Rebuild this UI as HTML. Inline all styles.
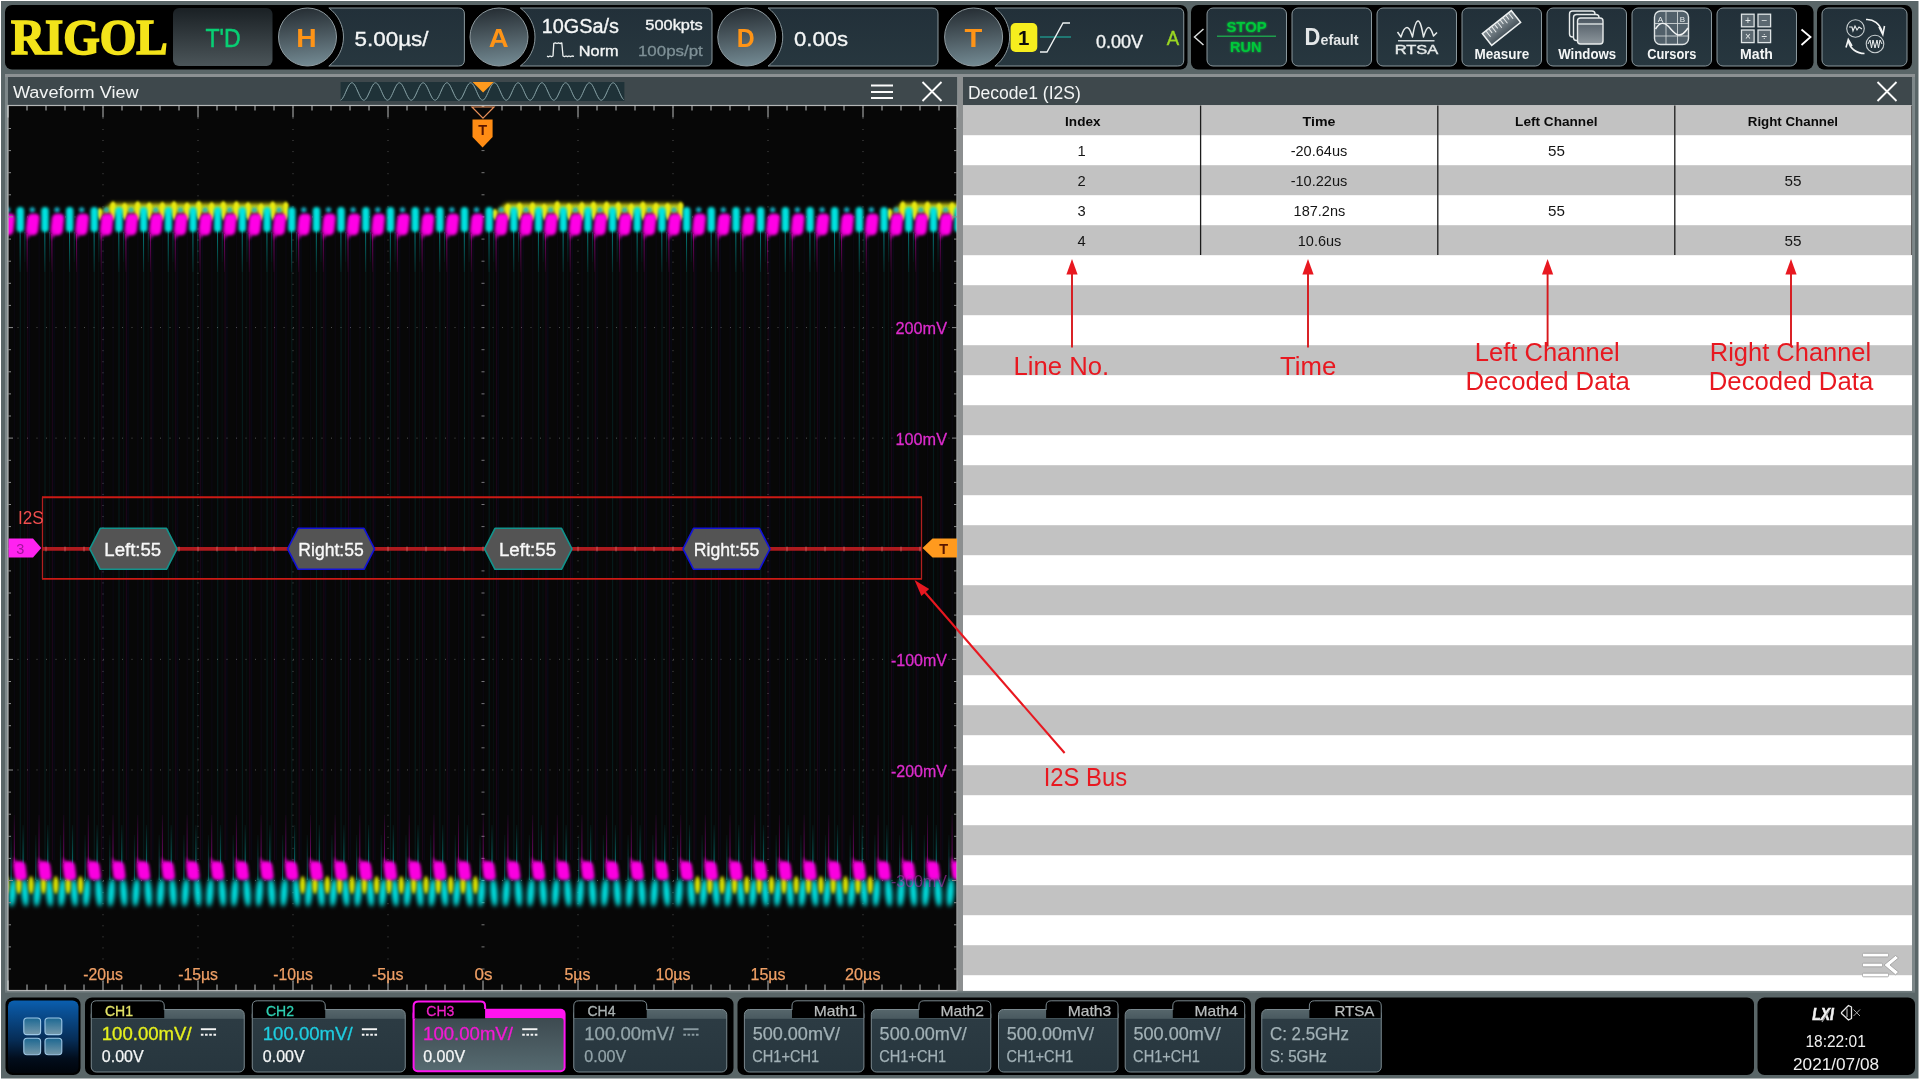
<!DOCTYPE html>
<html lang="en">
<head>
<meta charset="utf-8">
<title>RIGOL Oscilloscope - I2S Decode</title>
<style>
html,body{margin:0;padding:0;background:#fff;width:1920px;height:1080px;overflow:hidden}
svg{display:block;position:absolute;left:0;top:0;will-change:transform;transform:translateZ(0)}
text{white-space:pre}
</style>
</head>
<body>
<svg width="1920" height="1080" viewBox="0 0 1920 1080">
<defs>
<linearGradient id="gBtn" x1="0" y1="0" x2="0" y2="1"><stop offset="0" stop-color="#223039"/><stop offset="1" stop-color="#27373f"/></linearGradient>
<linearGradient id="gTD" x1="0" y1="0" x2="0" y2="1"><stop offset="0" stop-color="#1a2024"/><stop offset="1" stop-color="#4b5559"/></linearGradient>
<linearGradient id="gKnob" x1="0.45" y1="0" x2="0.55" y2="1"><stop offset="0" stop-color="#262e34"/><stop offset="0.5" stop-color="#4d5b62"/><stop offset="1" stop-color="#738a93"/></linearGradient>
<linearGradient id="gHome" x1="0" y1="0" x2="0" y2="1"><stop offset="0" stop-color="#0a5fb0"/><stop offset="0.08" stop-color="#0a56a0"/><stop offset="0.55" stop-color="#062c55"/><stop offset="0.8" stop-color="#020d1c"/><stop offset="1" stop-color="#00040a"/></linearGradient>
<linearGradient id="gSq" x1="0" y1="0" x2="0" y2="1"><stop offset="0" stop-color="#1d6a94"/><stop offset="1" stop-color="#7c9fb0"/></linearGradient>
<linearGradient id="gCh" x1="0" y1="0" x2="0" y2="1"><stop offset="0" stop-color="#56666b"/><stop offset="0.14" stop-color="#4a5a60"/><stop offset="0.16" stop-color="#2c3b43"/><stop offset="1" stop-color="#27363e"/></linearGradient>
<linearGradient id="gCh3" x1="0" y1="0" x2="0" y2="1"><stop offset="0" stop-color="#3d4a50"/><stop offset="1" stop-color="#566a70"/></linearGradient>
<linearGradient id="gWin" x1="0" y1="0" x2="0" y2="1"><stop offset="0" stop-color="#4a5560"/><stop offset="1" stop-color="#8d969c"/></linearGradient>
<linearGradient id="gRuler" x1="0" y1="0" x2="0" y2="1"><stop offset="0" stop-color="#8a959b"/><stop offset="1" stop-color="#46525a"/></linearGradient>
<filter id="b1" x="-20%" y="-20%" width="140%" height="140%"><feGaussianBlur stdDeviation="1.1"/></filter>
<filter id="b15" x="-20%" y="-20%" width="140%" height="140%"><feGaussianBlur stdDeviation="1.6"/></filter>
<filter id="b2" x="-20%" y="-50%" width="140%" height="200%"><feGaussianBlur stdDeviation="2.2"/></filter>
<filter id="b05" x="-20%" y="-20%" width="140%" height="140%"><feGaussianBlur stdDeviation="0.5"/></filter>
<filter id="glow" x="-30%" y="-30%" width="160%" height="160%"><feGaussianBlur stdDeviation="1.3" result="b"/><feMerge><feMergeNode in="b"/><feMergeNode in="SourceGraphic"/></feMerge></filter>
</defs>
<rect x="0" y="0" width="1920" height="1080" fill="#ffffff"/>
<rect x="1" y="1" width="1917.5" height="1077.5" fill="#5a6668"/>
<rect x="5" y="74" width="1910" height="918.3" fill="#7d8789"/>
<rect x="5" y="990.5" width="1910" height="1.7999999999999545" fill="#707b7d"/>
<rect x="5" y="74" width="1910" height="3" fill="#8c9193"/>
<rect x="5" y="5" width="1182.5" height="64.5" rx="7" fill="#000"/>
<rect x="1191" y="5" width="622.5" height="64.5" rx="7" fill="#000"/>
<rect x="1817" y="5" width="95" height="64.5" rx="7" fill="#000"/>
<rect x="5.5" y="997.5" width="75.0" height="77.5" rx="7" fill="#000"/>
<rect x="85" y="997.5" width="648.5" height="77.5" rx="7" fill="#000"/>
<rect x="737.5" y="997.5" width="513.5" height="77.5" rx="7" fill="#000"/>
<rect x="1255" y="997.5" width="499" height="77.5" rx="7" fill="#000"/>
<rect x="1757.5" y="997.5" width="157.5" height="77.5" rx="7" fill="#000"/>
<text x="11.10" y="54.40" font-family='"Liberation Serif", serif' font-size="51.5" font-weight="bold" fill="#f3e31a" textLength="156.60" lengthAdjust="spacingAndGlyphs" stroke="#f3e31a" stroke-width="1.7" stroke-linejoin="miter">RIGOL</text>
<rect x="173" y="8" width="99.5" height="58" rx="6" fill="url(#gTD)"/>
<text x="205.40" y="47.00" font-family='"Liberation Sans", sans-serif' font-size="25" font-weight="normal" fill="#08cf74" textLength="35.20" lengthAdjust="spacingAndGlyphs" stroke="#08cf74" stroke-width="0.5">T'D</text>
<path d="M328.83,8 L458.4,8 Q464.4,8 464.4,14 L464.4,60 Q464.4,66 458.4,66 L328.83,66 A36.0,36.0 0 0 0 328.83,8 Z" fill="url(#gBtn)" stroke="#8a979c" stroke-width="1"/>
<circle cx="307.5" cy="37" r="29" fill="url(#gKnob)" stroke="#8f9ba0" stroke-width="1"/>
<text x="296.30" y="47.00" font-family='"Liberation Sans", sans-serif' font-size="25" font-weight="bold" fill="#ff9418" textLength="20.40" lengthAdjust="spacingAndGlyphs" filter="url(#b05)">H</text>
<path d="M520.33,8 L706,8 Q712,8 712,14 L712,60 Q712,66 706,66 L520.33,66 A36.0,36.0 0 0 0 520.33,8 Z" fill="url(#gBtn)" stroke="#8a979c" stroke-width="1"/>
<circle cx="499" cy="37" r="29" fill="url(#gKnob)" stroke="#8f9ba0" stroke-width="1"/>
<text x="488.80" y="47.00" font-family='"Liberation Sans", sans-serif' font-size="25" font-weight="bold" fill="#ff9418" textLength="19.90" lengthAdjust="spacingAndGlyphs" filter="url(#b05)">A</text>
<path d="M768.08,8 L932,8 Q938,8 938,14 L938,60 Q938,66 932,66 L768.08,66 A36.0,36.0 0 0 0 768.08,8 Z" fill="url(#gBtn)" stroke="#8a979c" stroke-width="1"/>
<circle cx="746.75" cy="37" r="29" fill="url(#gKnob)" stroke="#8f9ba0" stroke-width="1"/>
<text x="736.80" y="47.00" font-family='"Liberation Sans", sans-serif' font-size="25" font-weight="bold" fill="#ff9418" textLength="17.90" lengthAdjust="spacingAndGlyphs" filter="url(#b05)">D</text>
<path d="M994.93,8 L1177.75,8 Q1183.75,8 1183.75,14 L1183.75,60 Q1183.75,66 1177.75,66 L994.93,66 A36.0,36.0 0 0 0 994.93,8 Z" fill="url(#gBtn)" stroke="#8a979c" stroke-width="1"/>
<circle cx="973.6" cy="37" r="29" fill="url(#gKnob)" stroke="#8f9ba0" stroke-width="1"/>
<text x="964.40" y="47.00" font-family='"Liberation Sans", sans-serif' font-size="25" font-weight="bold" fill="#ff9418" textLength="17.80" lengthAdjust="spacingAndGlyphs" filter="url(#b05)">T</text>
<text x="354.60" y="45.60" font-family='"Liberation Sans", sans-serif' font-size="21" font-weight="normal" fill="#f4f6f6" textLength="73.90" lengthAdjust="spacingAndGlyphs" stroke="#f4f6f6" stroke-width="0.35">5.00µs/</text>
<text x="541.75" y="32.60" font-family='"Liberation Sans", sans-serif' font-size="19.6" font-weight="normal" fill="#f4f6f6" textLength="77.25" lengthAdjust="spacingAndGlyphs" stroke="#f4f6f6" stroke-width="0.35">10GSa/s</text>
<text x="645.30" y="29.50" font-family='"Liberation Sans", sans-serif' font-size="14.8" font-weight="normal" fill="#f4f6f6" textLength="57.40" lengthAdjust="spacingAndGlyphs" stroke="#f4f6f6" stroke-width="0.35">500kpts</text>
<text x="578.85" y="55.50" font-family='"Liberation Sans", sans-serif' font-size="15.3" font-weight="normal" fill="#f4f6f6" textLength="39.80" lengthAdjust="spacingAndGlyphs" stroke="#f4f6f6" stroke-width="0.35">Norm</text>
<text x="637.95" y="56.00" font-family='"Liberation Sans", sans-serif' font-size="15.5" font-weight="normal" fill="#7f9197" textLength="64.85" lengthAdjust="spacingAndGlyphs" stroke="#7f9197" stroke-width="0.3">100ps/pt</text>
<path d="M547,56.2 L548.5,56.8 L550,56 L551.5,56.6 L553,56 L553.8,43.4 L555.5,42.8 L557,43.5 L558.5,42.8 L560,43.5 L561.8,43 L563,56 L564.5,56.6 L566,56 L567.5,56.7 L569,56 L570.5,56.6 L572,56 L574,56.4" fill="none" stroke="#eef2f2" stroke-width="1.3" stroke-linejoin="round"/>
<text x="794.00" y="45.60" font-family='"Liberation Sans", sans-serif' font-size="21" font-weight="normal" fill="#f4f6f6" textLength="54.00" lengthAdjust="spacingAndGlyphs" stroke="#f4f6f6" stroke-width="0.35">0.00s</text>
<rect x="1010.6" y="23" width="26.699999999999932" height="29" rx="5" fill="#f6ee1e"/>
<text x="1023.60" y="45.20" font-family='"Liberation Sans", sans-serif' font-size="20.5" font-weight="bold" fill="#0c0c0c" text-anchor="middle">1</text>
<path d="M1040,37 L1071,37" stroke="#1f8f86" stroke-width="1.5" fill="none"/>
<path d="M1040,52 L1047,52 L1063,23 L1070,23" stroke="#eef2f2" stroke-width="1.4" fill="none"/>
<text x="1096.00" y="47.50" font-family='"Liberation Sans", sans-serif' font-size="18.5" font-weight="normal" fill="#f4f6f6" textLength="47.00" lengthAdjust="spacingAndGlyphs" stroke="#f4f6f6" stroke-width="0.35">0.00V</text>
<text x="1166.80" y="45.00" font-family='"Liberation Sans", sans-serif' font-size="19.5" font-weight="normal" fill="#9bd822" textLength="12.40" lengthAdjust="spacingAndGlyphs" stroke="#9bd822" stroke-width="0.4">A</text>
<path d="M1203.5,29 L1194.5,37 L1203.5,45" stroke="#d8dcdc" stroke-width="1.5" fill="none"/>
<path d="M1801.5,29.5 L1810.5,37 L1801.5,45" stroke="#ffffff" stroke-width="1.8" fill="none"/>
<rect x="1207" y="8" width="79.5" height="58" rx="6" fill="url(#gBtn)" stroke="#8a979c" stroke-width="1"/>
<rect x="1292" y="8" width="79.5" height="58" rx="6" fill="url(#gBtn)" stroke="#8a979c" stroke-width="1"/>
<rect x="1377" y="8" width="79.5" height="58" rx="6" fill="url(#gBtn)" stroke="#8a979c" stroke-width="1"/>
<rect x="1462" y="8" width="79.5" height="58" rx="6" fill="url(#gBtn)" stroke="#8a979c" stroke-width="1"/>
<rect x="1547" y="8" width="79.5" height="58" rx="6" fill="url(#gBtn)" stroke="#8a979c" stroke-width="1"/>
<rect x="1632" y="8" width="79.5" height="58" rx="6" fill="url(#gBtn)" stroke="#8a979c" stroke-width="1"/>
<rect x="1717" y="8" width="79.5" height="58" rx="6" fill="url(#gBtn)" stroke="#8a979c" stroke-width="1"/>
<rect x="1822" y="8" width="85" height="58" rx="6" fill="url(#gBtn)" stroke="#8a979c" stroke-width="1"/>
<text x="1226.50" y="32.00" font-family='"Liberation Sans", sans-serif' font-size="15.5" font-weight="bold" fill="#06c83a" textLength="40.00" lengthAdjust="spacingAndGlyphs" filter="url(#glow)">STOP</text>
<path d="M1217,36.2 L1276,36.2" stroke="#1f9e4c" stroke-width="1.5"/>
<text x="1230.10" y="52.00" font-family='"Liberation Sans", sans-serif' font-size="15.5" font-weight="bold" fill="#06c83a" textLength="31.40" lengthAdjust="spacingAndGlyphs" filter="url(#glow)">RUN</text>
<text x="1304.6" y="45" font-family='"Liberation Sans", sans-serif' font-weight="bold" fill="#e4e7e8" textLength="54" lengthAdjust="spacingAndGlyphs"><tspan font-size="23">D</tspan><tspan font-size="15" dy="-0.5">efault</tspan></text>
<path d="M1397.5,32 L1401,37 C1403,30 1405,27.5 1407,27.5 C1410,27.5 1411,33 1412.5,37 C1414,28 1415.5,21 1418,21 C1420.5,21 1422,29 1423.5,37 C1425,32 1426.5,27.5 1428.5,27.5 C1431,27.5 1432,32 1433.5,36 L1437,32.5" fill="none" stroke="#e6eaea" stroke-width="1.5" stroke-linejoin="round"/>
<path d="M1398,40.8 L1434.5,40.8" stroke="#cfd6d8" stroke-width="1.6"/>
<text x="1394.70" y="54.40" font-family='"Liberation Sans", sans-serif' font-size="13.2" font-weight="normal" fill="#e6eaea" textLength="43.60" lengthAdjust="spacingAndGlyphs" stroke="#e6eaea" stroke-width="0.4">RTSA</text>
<g transform="translate(1501.5,28) rotate(-38.5)"><rect x="-18.5" y="-7.5" width="37" height="15" fill="url(#gRuler)" stroke="#eef1f1" stroke-width="1.5"/><path d="M-14.0,-7 L-14.0,0" stroke="#eef1f1" stroke-width="1"/><path d="M-10.4,-7 L-10.4,-2" stroke="#eef1f1" stroke-width="1"/><path d="M-6.8,-7 L-6.8,0" stroke="#eef1f1" stroke-width="1"/><path d="M-3.2,-7 L-3.2,-2" stroke="#eef1f1" stroke-width="1"/><path d="M0.4,-7 L0.4,0" stroke="#eef1f1" stroke-width="1"/><path d="M4.0,-7 L4.0,-2" stroke="#eef1f1" stroke-width="1"/><path d="M7.6,-7 L7.6,0" stroke="#eef1f1" stroke-width="1"/><path d="M11.2,-7 L11.2,-2" stroke="#eef1f1" stroke-width="1"/><path d="M14.8,-7 L14.8,0" stroke="#eef1f1" stroke-width="1"/></g>
<text x="1474.50" y="59.40" font-family='"Liberation Sans", sans-serif' font-size="15.5" font-weight="bold" fill="#f4f6f6" textLength="54.75" lengthAdjust="spacingAndGlyphs">Measure</text>
<rect x="1569.5" y="11" width="25.5" height="26" rx="3" fill="#2a3840" stroke="#e8ecec" stroke-width="1.4"/>
<rect x="1573.5" y="14.5" width="25.5" height="26" rx="3" fill="#2a3840" stroke="#e8ecec" stroke-width="1.4"/>
<rect x="1577.5" y="18" width="25.5" height="26" rx="3" fill="url(#gWin)" stroke="#e8ecec" stroke-width="1.4"/>
<path d="M1578,24 L1603,24" stroke="#e8ecec" stroke-width="1.3"/>
<text x="1558.25" y="59.40" font-family='"Liberation Sans", sans-serif' font-size="15.5" font-weight="bold" fill="#f4f6f6" textLength="57.85" lengthAdjust="spacingAndGlyphs">Windows</text>
<rect x="1654.5" y="11" width="34" height="33.5" rx="6" fill="#51606a" stroke="#dfe4e5" stroke-width="1.4"/>
<path d="M1666,11.5 L1666,44 M1677.5,11.5 L1677.5,44 M1655,23.5 L1688,23.5 M1655,36 L1688,36" stroke="#cfd5d6" stroke-width="0.9" fill="none"/>
<path d="M1655.5,29 C1660,22 1664,22 1668,26 C1672,30 1675,35 1679,35 C1683,35 1686,31 1688,28" stroke="#f2f4f4" stroke-width="1.5" fill="none"/>
<text x="1660.50" y="21.50" font-family='"Liberation Sans", sans-serif' font-size="8" font-weight="normal" fill="#e8ecec" text-anchor="middle">A</text>
<text x="1682.50" y="21.50" font-family='"Liberation Sans", sans-serif' font-size="8" font-weight="normal" fill="#e8ecec" text-anchor="middle">B</text>
<text x="1647.25" y="59.40" font-family='"Liberation Sans", sans-serif' font-size="15.5" font-weight="bold" fill="#f4f6f6" textLength="49.25" lengthAdjust="spacingAndGlyphs">Cursors</text>
<rect x="1741.5" y="14.2" width="12.6" height="12.6" fill="#5b6870" stroke="#dfe4e5" stroke-width="1.3"/>
<text x="1747.80" y="24.20" font-family='"Liberation Sans", sans-serif' font-size="10" font-weight="normal" fill="#e9eded" text-anchor="middle">+</text>
<rect x="1758" y="14.2" width="12.6" height="12.6" fill="#5b6870" stroke="#dfe4e5" stroke-width="1.3"/>
<text x="1764.30" y="24.20" font-family='"Liberation Sans", sans-serif' font-size="10" font-weight="normal" fill="#e9eded" text-anchor="middle">−</text>
<rect x="1741.5" y="30" width="12.6" height="12.6" fill="#5b6870" stroke="#dfe4e5" stroke-width="1.3"/>
<text x="1747.80" y="40.00" font-family='"Liberation Sans", sans-serif' font-size="10" font-weight="normal" fill="#e9eded" text-anchor="middle">×</text>
<rect x="1758" y="30" width="12.6" height="12.6" fill="#5b6870" stroke="#dfe4e5" stroke-width="1.3"/>
<text x="1764.30" y="40.00" font-family='"Liberation Sans", sans-serif' font-size="10" font-weight="normal" fill="#e9eded" text-anchor="middle">÷</text>
<text x="1740.10" y="59.40" font-family='"Liberation Sans", sans-serif' font-size="15.5" font-weight="bold" fill="#f4f6f6" textLength="32.90" lengthAdjust="spacingAndGlyphs">Math</text>
<circle cx="1855.5" cy="28.5" r="8.8" fill="none" stroke="#c9d0d2" stroke-width="1.1"/>
<circle cx="1875" cy="44" r="8.8" fill="none" stroke="#c9d0d2" stroke-width="1.1"/>
<path d="M1849,27 L1852,27 L1853,31 L1855,26 L1857,30 L1859,27 L1862,29" fill="none" stroke="#eef1f1" stroke-width="1.1"/>
<path d="M1868,44 L1870,40 L1871.5,48 L1873,40 L1875,48 L1877,40 L1878.5,48 L1880,40 L1882,44" fill="none" stroke="#eef1f1" stroke-width="1"/>
<path d="M1866,19.5 C1873,19 1880,23 1882.5,33" fill="none" stroke="#f2f4f4" stroke-width="1.6"/>
<path d="M1879,27 L1882.8,34.5 L1884.5,26" fill="none" stroke="#f2f4f4" stroke-width="1.6"/>
<path d="M1864.5,53.5 C1857,53.5 1850,49 1848.5,41" fill="none" stroke="#f2f4f4" stroke-width="1.6"/>
<path d="M1846,47.5 L1848.3,39.5 L1852,46" fill="none" stroke="#f2f4f4" stroke-width="1.6"/>
<rect x="8" y="77" width="949" height="28.5" fill="#3e484c"/>
<text x="12.90" y="98.30" font-family='"Liberation Sans", sans-serif' font-size="16.9" font-weight="normal" fill="#f2f4f4" textLength="125.70" lengthAdjust="spacingAndGlyphs">Waveform View</text>
<rect x="340.6" y="82" width="283.79999999999995" height="19" fill="#1f3238"/>
<polyline points="340.6,100.1 341.6,99.5 342.6,98.3 343.6,96.6 344.6,94.6 345.6,92.3 346.6,90.0 347.6,87.8 348.6,85.9 349.6,84.4 350.6,83.3 351.6,82.8 352.6,82.9 353.6,83.7 354.6,84.9 355.6,86.6 356.6,88.7 357.6,91.0 358.6,93.2 359.6,95.4 360.6,97.3 361.6,98.8 362.6,99.8 363.6,100.2 364.6,100.0 365.6,99.2 366.6,97.9 367.6,96.1 368.6,94.0 369.6,91.8 370.6,89.5 371.6,87.3 372.6,85.5 373.6,84.0 374.6,83.1 375.6,82.8 376.6,83.1 377.6,83.9 378.6,85.3 379.6,87.1 380.6,89.3 381.6,91.5 382.6,93.8 383.6,95.9 384.6,97.7 385.6,99.1 386.6,99.9 387.6,100.2 388.6,99.9 389.6,98.9 390.6,97.5 391.6,95.6 392.6,93.5 393.6,91.2 394.6,88.9 395.6,86.8 396.6,85.1 397.6,83.8 398.6,83.0 399.6,82.8 400.6,83.2 401.6,84.2 402.6,85.7 403.6,87.6 404.6,89.8 405.6,92.1 406.6,94.4 407.6,96.4 408.6,98.1 409.6,99.4 410.6,100.1 411.6,100.2 412.6,99.7 413.6,98.6 414.6,97.0 415.6,95.1 416.6,92.9 417.6,90.6 418.6,88.4 419.6,86.4 420.6,84.7 421.6,83.5 422.6,82.9 423.6,82.9 424.6,83.4 425.6,84.6 426.6,86.2 427.6,88.2 428.6,90.4 429.6,92.7 430.6,94.9 431.6,96.9 432.6,98.5 433.6,99.6 434.6,100.1 435.6,100.1 436.6,99.5 437.6,98.3 438.6,96.6 439.6,94.6 440.6,92.3 441.6,90.0 442.6,87.8 443.6,85.9 444.6,84.4 445.6,83.3 446.6,82.8 447.6,82.9 448.6,83.7 449.6,84.9 450.6,86.6 451.6,88.7 452.6,91.0 453.6,93.2 454.6,95.4 455.6,97.3 456.6,98.8 457.6,99.8 458.6,100.2 459.6,100.0 460.6,99.2 461.6,97.9 462.6,96.1 463.6,94.0 464.6,91.8 465.6,89.5 466.6,87.3 467.6,85.5 468.6,84.0 469.6,83.1 470.6,82.8 471.6,83.1 472.6,83.9 473.6,85.3 474.6,87.1 475.6,89.3 476.6,91.5 477.6,93.8 478.6,95.9 479.6,97.7 480.6,99.1 481.6,99.9 482.6,100.2 483.6,99.9 484.6,98.9 485.6,97.5 486.6,95.6 487.6,93.5 488.6,91.2 489.6,88.9 490.6,86.8 491.6,85.1 492.6,83.8 493.6,83.0 494.6,82.8 495.6,83.2 496.6,84.2 497.6,85.7 498.6,87.6 499.6,89.8 500.6,92.1 501.6,94.4 502.6,96.4 503.6,98.1 504.6,99.4 505.6,100.1 506.6,100.2 507.6,99.7 508.6,98.6 509.6,97.0 510.6,95.1 511.6,92.9 512.6,90.6 513.6,88.4 514.6,86.4 515.6,84.7 516.6,83.5 517.6,82.9 518.6,82.9 519.6,83.4 520.6,84.6 521.6,86.2 522.6,88.2 523.6,90.4 524.6,92.7 525.6,94.9 526.6,96.9 527.6,98.5 528.6,99.6 529.6,100.1 530.6,100.1 531.6,99.5 532.6,98.3 533.6,96.6 534.6,94.6 535.6,92.3 536.6,90.0 537.6,87.8 538.6,85.9 539.6,84.4 540.6,83.3 541.6,82.8 542.6,82.9 543.6,83.7 544.6,84.9 545.6,86.6 546.6,88.7 547.6,91.0 548.6,93.2 549.6,95.4 550.6,97.3 551.6,98.8 552.6,99.8 553.6,100.2 554.6,100.0 555.6,99.2 556.6,97.9 557.6,96.1 558.6,94.0 559.6,91.8 560.6,89.5 561.6,87.3 562.6,85.5 563.6,84.0 564.6,83.1 565.6,82.8 566.6,83.1 567.6,83.9 568.6,85.3 569.6,87.1 570.6,89.3 571.6,91.5 572.6,93.8 573.6,95.9 574.6,97.7 575.6,99.1 576.6,99.9 577.6,100.2 578.6,99.9 579.6,98.9 580.6,97.5 581.6,95.6 582.6,93.5 583.6,91.2 584.6,88.9 585.6,86.8 586.6,85.1 587.6,83.8 588.6,83.0 589.6,82.8 590.6,83.2 591.6,84.2 592.6,85.7 593.6,87.6 594.6,89.8 595.6,92.1 596.6,94.4 597.6,96.4 598.6,98.1 599.6,99.4 600.6,100.1 601.6,100.2 602.6,99.7 603.6,98.6 604.6,97.0 605.6,95.1 606.6,92.9 607.6,90.6 608.6,88.4 609.6,86.4 610.6,84.7 611.6,83.5 612.6,82.9 613.6,82.9 614.6,83.4 615.6,84.6 616.6,86.2 617.6,88.2 618.6,90.4 619.6,92.7 620.6,94.9 621.6,96.9 622.6,98.5 623.6,99.6" fill="none" stroke="#8ba6aa" stroke-width="1"/>
<polygon points="472.5,82 493.8,82 483.1,92.5" fill="#ff9a1e"/>
<path d="M871,85.6 L893,85.6 M871,91.9 L893,91.9 M871,98.1 L893,98.1" stroke="#fbfbfb" stroke-width="2"/>
<path d="M922.5,82 L941.5,101 M941.5,82 L922.5,101" stroke="#fbfbfb" stroke-width="1.8"/>
<rect x="8.0" y="105.5" width="949.0" height="885.0" fill="#070707"/>
<clipPath id="plotclip"><rect x="8" y="105.5" width="949" height="885"/></clipPath>
<g clip-path="url(#plotclip)">
<path d="M103.0,106.0 L103.0,990.5" stroke="#9a9a9a" stroke-width="1" stroke-dasharray="1 10.06" stroke-dashoffset="10.21" opacity="0.5"/>
<path d="M198.0,106.0 L198.0,990.5" stroke="#9a9a9a" stroke-width="1" stroke-dasharray="1 10.06" stroke-dashoffset="10.21" opacity="0.5"/>
<path d="M293.0,106.0 L293.0,990.5" stroke="#9a9a9a" stroke-width="1" stroke-dasharray="1 10.06" stroke-dashoffset="10.21" opacity="0.5"/>
<path d="M388.0,106.0 L388.0,990.5" stroke="#9a9a9a" stroke-width="1" stroke-dasharray="1 10.06" stroke-dashoffset="10.21" opacity="0.5"/>
<path d="M578.0,106.0 L578.0,990.5" stroke="#9a9a9a" stroke-width="1" stroke-dasharray="1 10.06" stroke-dashoffset="10.21" opacity="0.5"/>
<path d="M673.0,106.0 L673.0,990.5" stroke="#9a9a9a" stroke-width="1" stroke-dasharray="1 10.06" stroke-dashoffset="10.21" opacity="0.5"/>
<path d="M768.0,106.0 L768.0,990.5" stroke="#9a9a9a" stroke-width="1" stroke-dasharray="1 10.06" stroke-dashoffset="10.21" opacity="0.5"/>
<path d="M863.0,106.0 L863.0,990.5" stroke="#9a9a9a" stroke-width="1" stroke-dasharray="1 10.06" stroke-dashoffset="10.21" opacity="0.5"/>
<path d="M8.0,216.95000000000005 L957.0,216.95000000000005" stroke="#9a9a9a" stroke-width="1" stroke-dasharray="1 8.5" opacity="0.5"/>
<path d="M8.0,327.55 L957.0,327.55" stroke="#9a9a9a" stroke-width="1" stroke-dasharray="1 8.5" opacity="0.5"/>
<path d="M8.0,438.15 L957.0,438.15" stroke="#9a9a9a" stroke-width="1" stroke-dasharray="1 8.5" opacity="0.5"/>
<path d="M8.0,659.35 L957.0,659.35" stroke="#9a9a9a" stroke-width="1" stroke-dasharray="1 8.5" opacity="0.5"/>
<path d="M8.0,769.95 L957.0,769.95" stroke="#9a9a9a" stroke-width="1" stroke-dasharray="1 8.5" opacity="0.5"/>
<path d="M8.0,880.55 L957.0,880.55" stroke="#9a9a9a" stroke-width="1" stroke-dasharray="1 8.5" opacity="0.5"/>
<path d="M481.5,106.4 L484.5,106.4 M481.5,128.5 L484.5,128.5 M481.5,150.6 L484.5,150.6 M481.5,172.7 L484.5,172.7 M481.5,194.8 L484.5,194.8 M481.5,216.9 L484.5,216.9 M481.5,239.1 L484.5,239.1 M481.5,261.2 L484.5,261.2 M481.5,283.3 L484.5,283.3 M481.5,305.4 L484.5,305.4 M481.5,327.6 L484.5,327.6 M481.5,349.7 L484.5,349.7 M481.5,371.8 L484.5,371.8 M481.5,393.9 L484.5,393.9 M481.5,416.0 L484.5,416.0 M481.5,438.1 L484.5,438.1 M481.5,460.3 L484.5,460.3 M481.5,482.4 L484.5,482.4 M481.5,504.5 L484.5,504.5 M481.5,526.6 L484.5,526.6 M481.5,548.8 L484.5,548.8 M481.5,570.9 L484.5,570.9 M481.5,593.0 L484.5,593.0 M481.5,615.1 L484.5,615.1 M481.5,637.2 L484.5,637.2 M481.5,659.4 L484.5,659.4 M481.5,681.5 L484.5,681.5 M481.5,703.6 L484.5,703.6 M481.5,725.7 L484.5,725.7 M481.5,747.8 L484.5,747.8 M481.5,770.0 L484.5,770.0 M481.5,792.1 L484.5,792.1 M481.5,814.2 L484.5,814.2 M481.5,836.3 L484.5,836.3 M481.5,858.4 L484.5,858.4 M481.5,880.5 L484.5,880.5 M481.5,902.7 L484.5,902.7 M481.5,924.8 L484.5,924.8 M481.5,946.9 L484.5,946.9 M481.5,969.0 L484.5,969.0 M481.5,991.1 L484.5,991.1" stroke="#8c8c8c" stroke-width="1" opacity="0.85"/>
<rect x="-5.0" y="235" width="1.2" height="625" fill="#00d0d0" opacity="0.10"/><rect x="2.4" y="235" width="1.2" height="625" fill="#e000c8" opacity="0.09"/><rect x="-0.5" y="235" width="1" height="625" fill="#00a0a0" opacity="0.07"/><rect x="4.0" y="235" width="1.5" height="625" fill="#2030c0" opacity="0.07"/><rect x="-11.0" y="235" width="1.5" height="625" fill="#4020a0" opacity="0.06"/><rect x="19.7" y="235" width="1.2" height="625" fill="#00d0d0" opacity="0.10"/><rect x="27.1" y="235" width="1.2" height="625" fill="#e000c8" opacity="0.09"/><rect x="24.2" y="235" width="1" height="625" fill="#00a0a0" opacity="0.07"/><rect x="28.7" y="235" width="1.5" height="625" fill="#2030c0" opacity="0.07"/><rect x="13.7" y="235" width="1.5" height="625" fill="#4020a0" opacity="0.06"/><rect x="44.4" y="235" width="1.2" height="625" fill="#00d0d0" opacity="0.10"/><rect x="51.8" y="235" width="1.2" height="625" fill="#e000c8" opacity="0.09"/><rect x="48.9" y="235" width="1" height="625" fill="#00a0a0" opacity="0.07"/><rect x="53.4" y="235" width="1.5" height="625" fill="#2030c0" opacity="0.07"/><rect x="38.4" y="235" width="1.5" height="625" fill="#4020a0" opacity="0.06"/><rect x="69.1" y="235" width="1.2" height="625" fill="#00d0d0" opacity="0.10"/><rect x="76.5" y="235" width="1.2" height="625" fill="#e000c8" opacity="0.09"/><rect x="73.6" y="235" width="1" height="625" fill="#00a0a0" opacity="0.07"/><rect x="78.1" y="235" width="1.5" height="625" fill="#2030c0" opacity="0.07"/><rect x="63.1" y="235" width="1.5" height="625" fill="#4020a0" opacity="0.06"/><rect x="93.7" y="235" width="1.2" height="625" fill="#00d0d0" opacity="0.10"/><rect x="101.1" y="235" width="1.2" height="625" fill="#e000c8" opacity="0.09"/><rect x="98.2" y="235" width="1" height="625" fill="#00a0a0" opacity="0.07"/><rect x="102.7" y="235" width="1.5" height="625" fill="#2030c0" opacity="0.07"/><rect x="87.7" y="235" width="1.5" height="625" fill="#4020a0" opacity="0.06"/><rect x="118.4" y="235" width="1.2" height="625" fill="#00d0d0" opacity="0.10"/><rect x="125.8" y="235" width="1.2" height="625" fill="#e000c8" opacity="0.09"/><rect x="122.9" y="235" width="1" height="625" fill="#00a0a0" opacity="0.07"/><rect x="127.4" y="235" width="1.5" height="625" fill="#2030c0" opacity="0.07"/><rect x="112.4" y="235" width="1.5" height="625" fill="#4020a0" opacity="0.06"/><rect x="143.1" y="235" width="1.2" height="625" fill="#00d0d0" opacity="0.10"/><rect x="150.5" y="235" width="1.2" height="625" fill="#e000c8" opacity="0.09"/><rect x="147.6" y="235" width="1" height="625" fill="#00a0a0" opacity="0.07"/><rect x="152.1" y="235" width="1.5" height="625" fill="#2030c0" opacity="0.07"/><rect x="137.1" y="235" width="1.5" height="625" fill="#4020a0" opacity="0.06"/><rect x="167.8" y="235" width="1.2" height="625" fill="#00d0d0" opacity="0.10"/><rect x="175.2" y="235" width="1.2" height="625" fill="#e000c8" opacity="0.09"/><rect x="172.3" y="235" width="1" height="625" fill="#00a0a0" opacity="0.07"/><rect x="176.8" y="235" width="1.5" height="625" fill="#2030c0" opacity="0.07"/><rect x="161.8" y="235" width="1.5" height="625" fill="#4020a0" opacity="0.06"/><rect x="192.5" y="235" width="1.2" height="625" fill="#00d0d0" opacity="0.10"/><rect x="199.9" y="235" width="1.2" height="625" fill="#e000c8" opacity="0.09"/><rect x="197.0" y="235" width="1" height="625" fill="#00a0a0" opacity="0.07"/><rect x="201.5" y="235" width="1.5" height="625" fill="#2030c0" opacity="0.07"/><rect x="186.5" y="235" width="1.5" height="625" fill="#4020a0" opacity="0.06"/><rect x="217.1" y="235" width="1.2" height="625" fill="#00d0d0" opacity="0.10"/><rect x="224.5" y="235" width="1.2" height="625" fill="#e000c8" opacity="0.09"/><rect x="221.6" y="235" width="1" height="625" fill="#00a0a0" opacity="0.07"/><rect x="226.1" y="235" width="1.5" height="625" fill="#2030c0" opacity="0.07"/><rect x="211.1" y="235" width="1.5" height="625" fill="#4020a0" opacity="0.06"/><rect x="241.8" y="235" width="1.2" height="625" fill="#00d0d0" opacity="0.10"/><rect x="249.2" y="235" width="1.2" height="625" fill="#e000c8" opacity="0.09"/><rect x="246.3" y="235" width="1" height="625" fill="#00a0a0" opacity="0.07"/><rect x="250.8" y="235" width="1.5" height="625" fill="#2030c0" opacity="0.07"/><rect x="235.8" y="235" width="1.5" height="625" fill="#4020a0" opacity="0.06"/><rect x="266.5" y="235" width="1.2" height="625" fill="#00d0d0" opacity="0.10"/><rect x="273.9" y="235" width="1.2" height="625" fill="#e000c8" opacity="0.09"/><rect x="271.0" y="235" width="1" height="625" fill="#00a0a0" opacity="0.07"/><rect x="275.5" y="235" width="1.5" height="625" fill="#2030c0" opacity="0.07"/><rect x="260.5" y="235" width="1.5" height="625" fill="#4020a0" opacity="0.06"/><rect x="291.2" y="235" width="1.2" height="625" fill="#00d0d0" opacity="0.10"/><rect x="298.6" y="235" width="1.2" height="625" fill="#e000c8" opacity="0.09"/><rect x="295.7" y="235" width="1" height="625" fill="#00a0a0" opacity="0.07"/><rect x="300.2" y="235" width="1.5" height="625" fill="#2030c0" opacity="0.07"/><rect x="285.2" y="235" width="1.5" height="625" fill="#4020a0" opacity="0.06"/><rect x="315.9" y="235" width="1.2" height="625" fill="#00d0d0" opacity="0.10"/><rect x="323.3" y="235" width="1.2" height="625" fill="#e000c8" opacity="0.09"/><rect x="320.4" y="235" width="1" height="625" fill="#00a0a0" opacity="0.07"/><rect x="324.9" y="235" width="1.5" height="625" fill="#2030c0" opacity="0.07"/><rect x="309.9" y="235" width="1.5" height="625" fill="#4020a0" opacity="0.06"/><rect x="340.5" y="235" width="1.2" height="625" fill="#00d0d0" opacity="0.10"/><rect x="347.9" y="235" width="1.2" height="625" fill="#e000c8" opacity="0.09"/><rect x="345.0" y="235" width="1" height="625" fill="#00a0a0" opacity="0.07"/><rect x="349.5" y="235" width="1.5" height="625" fill="#2030c0" opacity="0.07"/><rect x="334.5" y="235" width="1.5" height="625" fill="#4020a0" opacity="0.06"/><rect x="365.2" y="235" width="1.2" height="625" fill="#00d0d0" opacity="0.10"/><rect x="372.6" y="235" width="1.2" height="625" fill="#e000c8" opacity="0.09"/><rect x="369.7" y="235" width="1" height="625" fill="#00a0a0" opacity="0.07"/><rect x="374.2" y="235" width="1.5" height="625" fill="#2030c0" opacity="0.07"/><rect x="359.2" y="235" width="1.5" height="625" fill="#4020a0" opacity="0.06"/><rect x="389.9" y="235" width="1.2" height="625" fill="#00d0d0" opacity="0.10"/><rect x="397.3" y="235" width="1.2" height="625" fill="#e000c8" opacity="0.09"/><rect x="394.4" y="235" width="1" height="625" fill="#00a0a0" opacity="0.07"/><rect x="398.9" y="235" width="1.5" height="625" fill="#2030c0" opacity="0.07"/><rect x="383.9" y="235" width="1.5" height="625" fill="#4020a0" opacity="0.06"/><rect x="414.6" y="235" width="1.2" height="625" fill="#00d0d0" opacity="0.10"/><rect x="422.0" y="235" width="1.2" height="625" fill="#e000c8" opacity="0.09"/><rect x="419.1" y="235" width="1" height="625" fill="#00a0a0" opacity="0.07"/><rect x="423.6" y="235" width="1.5" height="625" fill="#2030c0" opacity="0.07"/><rect x="408.6" y="235" width="1.5" height="625" fill="#4020a0" opacity="0.06"/><rect x="439.3" y="235" width="1.2" height="625" fill="#00d0d0" opacity="0.10"/><rect x="446.7" y="235" width="1.2" height="625" fill="#e000c8" opacity="0.09"/><rect x="443.8" y="235" width="1" height="625" fill="#00a0a0" opacity="0.07"/><rect x="448.3" y="235" width="1.5" height="625" fill="#2030c0" opacity="0.07"/><rect x="433.3" y="235" width="1.5" height="625" fill="#4020a0" opacity="0.06"/><rect x="463.9" y="235" width="1.2" height="625" fill="#00d0d0" opacity="0.10"/><rect x="471.3" y="235" width="1.2" height="625" fill="#e000c8" opacity="0.09"/><rect x="468.4" y="235" width="1" height="625" fill="#00a0a0" opacity="0.07"/><rect x="472.9" y="235" width="1.5" height="625" fill="#2030c0" opacity="0.07"/><rect x="457.9" y="235" width="1.5" height="625" fill="#4020a0" opacity="0.06"/><rect x="488.6" y="235" width="1.2" height="625" fill="#00d0d0" opacity="0.10"/><rect x="496.0" y="235" width="1.2" height="625" fill="#e000c8" opacity="0.09"/><rect x="493.1" y="235" width="1" height="625" fill="#00a0a0" opacity="0.07"/><rect x="497.6" y="235" width="1.5" height="625" fill="#2030c0" opacity="0.07"/><rect x="482.6" y="235" width="1.5" height="625" fill="#4020a0" opacity="0.06"/><rect x="513.3" y="235" width="1.2" height="625" fill="#00d0d0" opacity="0.10"/><rect x="520.7" y="235" width="1.2" height="625" fill="#e000c8" opacity="0.09"/><rect x="517.8" y="235" width="1" height="625" fill="#00a0a0" opacity="0.07"/><rect x="522.3" y="235" width="1.5" height="625" fill="#2030c0" opacity="0.07"/><rect x="507.3" y="235" width="1.5" height="625" fill="#4020a0" opacity="0.06"/><rect x="538.0" y="235" width="1.2" height="625" fill="#00d0d0" opacity="0.10"/><rect x="545.4" y="235" width="1.2" height="625" fill="#e000c8" opacity="0.09"/><rect x="542.5" y="235" width="1" height="625" fill="#00a0a0" opacity="0.07"/><rect x="547.0" y="235" width="1.5" height="625" fill="#2030c0" opacity="0.07"/><rect x="532.0" y="235" width="1.5" height="625" fill="#4020a0" opacity="0.06"/><rect x="562.7" y="235" width="1.2" height="625" fill="#00d0d0" opacity="0.10"/><rect x="570.1" y="235" width="1.2" height="625" fill="#e000c8" opacity="0.09"/><rect x="567.2" y="235" width="1" height="625" fill="#00a0a0" opacity="0.07"/><rect x="571.7" y="235" width="1.5" height="625" fill="#2030c0" opacity="0.07"/><rect x="556.7" y="235" width="1.5" height="625" fill="#4020a0" opacity="0.06"/><rect x="587.3" y="235" width="1.2" height="625" fill="#00d0d0" opacity="0.10"/><rect x="594.7" y="235" width="1.2" height="625" fill="#e000c8" opacity="0.09"/><rect x="591.8" y="235" width="1" height="625" fill="#00a0a0" opacity="0.07"/><rect x="596.3" y="235" width="1.5" height="625" fill="#2030c0" opacity="0.07"/><rect x="581.3" y="235" width="1.5" height="625" fill="#4020a0" opacity="0.06"/><rect x="612.0" y="235" width="1.2" height="625" fill="#00d0d0" opacity="0.10"/><rect x="619.4" y="235" width="1.2" height="625" fill="#e000c8" opacity="0.09"/><rect x="616.5" y="235" width="1" height="625" fill="#00a0a0" opacity="0.07"/><rect x="621.0" y="235" width="1.5" height="625" fill="#2030c0" opacity="0.07"/><rect x="606.0" y="235" width="1.5" height="625" fill="#4020a0" opacity="0.06"/><rect x="636.7" y="235" width="1.2" height="625" fill="#00d0d0" opacity="0.10"/><rect x="644.1" y="235" width="1.2" height="625" fill="#e000c8" opacity="0.09"/><rect x="641.2" y="235" width="1" height="625" fill="#00a0a0" opacity="0.07"/><rect x="645.7" y="235" width="1.5" height="625" fill="#2030c0" opacity="0.07"/><rect x="630.7" y="235" width="1.5" height="625" fill="#4020a0" opacity="0.06"/><rect x="661.4" y="235" width="1.2" height="625" fill="#00d0d0" opacity="0.10"/><rect x="668.8" y="235" width="1.2" height="625" fill="#e000c8" opacity="0.09"/><rect x="665.9" y="235" width="1" height="625" fill="#00a0a0" opacity="0.07"/><rect x="670.4" y="235" width="1.5" height="625" fill="#2030c0" opacity="0.07"/><rect x="655.4" y="235" width="1.5" height="625" fill="#4020a0" opacity="0.06"/><rect x="686.1" y="235" width="1.2" height="625" fill="#00d0d0" opacity="0.10"/><rect x="693.5" y="235" width="1.2" height="625" fill="#e000c8" opacity="0.09"/><rect x="690.6" y="235" width="1" height="625" fill="#00a0a0" opacity="0.07"/><rect x="695.1" y="235" width="1.5" height="625" fill="#2030c0" opacity="0.07"/><rect x="680.1" y="235" width="1.5" height="625" fill="#4020a0" opacity="0.06"/><rect x="710.7" y="235" width="1.2" height="625" fill="#00d0d0" opacity="0.10"/><rect x="718.1" y="235" width="1.2" height="625" fill="#e000c8" opacity="0.09"/><rect x="715.2" y="235" width="1" height="625" fill="#00a0a0" opacity="0.07"/><rect x="719.7" y="235" width="1.5" height="625" fill="#2030c0" opacity="0.07"/><rect x="704.7" y="235" width="1.5" height="625" fill="#4020a0" opacity="0.06"/><rect x="735.4" y="235" width="1.2" height="625" fill="#00d0d0" opacity="0.10"/><rect x="742.8" y="235" width="1.2" height="625" fill="#e000c8" opacity="0.09"/><rect x="739.9" y="235" width="1" height="625" fill="#00a0a0" opacity="0.07"/><rect x="744.4" y="235" width="1.5" height="625" fill="#2030c0" opacity="0.07"/><rect x="729.4" y="235" width="1.5" height="625" fill="#4020a0" opacity="0.06"/><rect x="760.1" y="235" width="1.2" height="625" fill="#00d0d0" opacity="0.10"/><rect x="767.5" y="235" width="1.2" height="625" fill="#e000c8" opacity="0.09"/><rect x="764.6" y="235" width="1" height="625" fill="#00a0a0" opacity="0.07"/><rect x="769.1" y="235" width="1.5" height="625" fill="#2030c0" opacity="0.07"/><rect x="754.1" y="235" width="1.5" height="625" fill="#4020a0" opacity="0.06"/><rect x="784.8" y="235" width="1.2" height="625" fill="#00d0d0" opacity="0.10"/><rect x="792.2" y="235" width="1.2" height="625" fill="#e000c8" opacity="0.09"/><rect x="789.3" y="235" width="1" height="625" fill="#00a0a0" opacity="0.07"/><rect x="793.8" y="235" width="1.5" height="625" fill="#2030c0" opacity="0.07"/><rect x="778.8" y="235" width="1.5" height="625" fill="#4020a0" opacity="0.06"/><rect x="809.5" y="235" width="1.2" height="625" fill="#00d0d0" opacity="0.10"/><rect x="816.9" y="235" width="1.2" height="625" fill="#e000c8" opacity="0.09"/><rect x="814.0" y="235" width="1" height="625" fill="#00a0a0" opacity="0.07"/><rect x="818.5" y="235" width="1.5" height="625" fill="#2030c0" opacity="0.07"/><rect x="803.5" y="235" width="1.5" height="625" fill="#4020a0" opacity="0.06"/><rect x="834.1" y="235" width="1.2" height="625" fill="#00d0d0" opacity="0.10"/><rect x="841.5" y="235" width="1.2" height="625" fill="#e000c8" opacity="0.09"/><rect x="838.6" y="235" width="1" height="625" fill="#00a0a0" opacity="0.07"/><rect x="843.1" y="235" width="1.5" height="625" fill="#2030c0" opacity="0.07"/><rect x="828.1" y="235" width="1.5" height="625" fill="#4020a0" opacity="0.06"/><rect x="858.8" y="235" width="1.2" height="625" fill="#00d0d0" opacity="0.10"/><rect x="866.2" y="235" width="1.2" height="625" fill="#e000c8" opacity="0.09"/><rect x="863.3" y="235" width="1" height="625" fill="#00a0a0" opacity="0.07"/><rect x="867.8" y="235" width="1.5" height="625" fill="#2030c0" opacity="0.07"/><rect x="852.8" y="235" width="1.5" height="625" fill="#4020a0" opacity="0.06"/><rect x="883.5" y="235" width="1.2" height="625" fill="#00d0d0" opacity="0.10"/><rect x="890.9" y="235" width="1.2" height="625" fill="#e000c8" opacity="0.09"/><rect x="888.0" y="235" width="1" height="625" fill="#00a0a0" opacity="0.07"/><rect x="892.5" y="235" width="1.5" height="625" fill="#2030c0" opacity="0.07"/><rect x="877.5" y="235" width="1.5" height="625" fill="#4020a0" opacity="0.06"/><rect x="908.2" y="235" width="1.2" height="625" fill="#00d0d0" opacity="0.10"/><rect x="915.6" y="235" width="1.2" height="625" fill="#e000c8" opacity="0.09"/><rect x="912.7" y="235" width="1" height="625" fill="#00a0a0" opacity="0.07"/><rect x="917.2" y="235" width="1.5" height="625" fill="#2030c0" opacity="0.07"/><rect x="902.2" y="235" width="1.5" height="625" fill="#4020a0" opacity="0.06"/><rect x="932.9" y="235" width="1.2" height="625" fill="#00d0d0" opacity="0.10"/><rect x="940.3" y="235" width="1.2" height="625" fill="#e000c8" opacity="0.09"/><rect x="937.4" y="235" width="1" height="625" fill="#00a0a0" opacity="0.07"/><rect x="941.9" y="235" width="1.5" height="625" fill="#2030c0" opacity="0.07"/><rect x="926.9" y="235" width="1.5" height="625" fill="#4020a0" opacity="0.06"/><rect x="957.5" y="235" width="1.2" height="625" fill="#00d0d0" opacity="0.10"/><rect x="964.9" y="235" width="1.2" height="625" fill="#e000c8" opacity="0.09"/><rect x="962.0" y="235" width="1" height="625" fill="#00a0a0" opacity="0.07"/><rect x="966.5" y="235" width="1.5" height="625" fill="#2030c0" opacity="0.07"/><rect x="951.5" y="235" width="1.5" height="625" fill="#4020a0" opacity="0.06"/><rect x="982.2" y="235" width="1.2" height="625" fill="#00d0d0" opacity="0.10"/><rect x="989.6" y="235" width="1.2" height="625" fill="#e000c8" opacity="0.09"/><rect x="986.7" y="235" width="1" height="625" fill="#00a0a0" opacity="0.07"/><rect x="991.2" y="235" width="1.5" height="625" fill="#2030c0" opacity="0.07"/><rect x="976.2" y="235" width="1.5" height="625" fill="#4020a0" opacity="0.06"/>
<linearGradient id="tC" x1="0" y1="0" x2="0" y2="1"><stop offset="0" stop-color="#00e0e0" stop-opacity="0.5"/><stop offset="1" stop-color="#00e0e0" stop-opacity="0.08"/></linearGradient>
<linearGradient id="tM" x1="0" y1="0" x2="0" y2="1"><stop offset="0" stop-color="#ff00e0" stop-opacity="0.45"/><stop offset="1" stop-color="#ff00e0" stop-opacity="0.06"/></linearGradient>
<linearGradient id="tCu" x1="0" y1="1" x2="0" y2="0"><stop offset="0" stop-color="#00e0e0" stop-opacity="0.5"/><stop offset="1" stop-color="#00e0e0" stop-opacity="0.05"/></linearGradient>
<linearGradient id="tMu" x1="0" y1="1" x2="0" y2="0"><stop offset="0" stop-color="#ff00e0" stop-opacity="0.45"/><stop offset="1" stop-color="#ff00e0" stop-opacity="0.05"/></linearGradient>
<rect x="-5.1" y="230" width="1" height="42" fill="url(#tC)"/><rect x="1.9" y="234" width="1" height="38" fill="url(#tM)"/><rect x="-0.3" y="232" width="1" height="30" fill="url(#tC)" opacity="0.5"/><rect x="-10.9" y="815" width="1" height="48" fill="url(#tMu)"/><rect x="-2.2" y="825" width="1.2" height="45" fill="url(#tCu)"/><rect x="-14.2" y="835" width="1.2" height="45" fill="url(#tCu)" opacity="0.7"/><rect x="19.6" y="230" width="1" height="42" fill="url(#tC)"/><rect x="26.6" y="234" width="1" height="38" fill="url(#tM)"/><rect x="24.4" y="232" width="1" height="30" fill="url(#tC)" opacity="0.5"/><rect x="13.8" y="815" width="1" height="48" fill="url(#tMu)"/><rect x="22.5" y="825" width="1.2" height="45" fill="url(#tCu)"/><rect x="10.5" y="835" width="1.2" height="45" fill="url(#tCu)" opacity="0.7"/><rect x="44.3" y="230" width="1" height="42" fill="url(#tC)"/><rect x="51.3" y="234" width="1" height="38" fill="url(#tM)"/><rect x="49.1" y="232" width="1" height="30" fill="url(#tC)" opacity="0.5"/><rect x="38.5" y="815" width="1" height="48" fill="url(#tMu)"/><rect x="47.2" y="825" width="1.2" height="45" fill="url(#tCu)"/><rect x="35.2" y="835" width="1.2" height="45" fill="url(#tCu)" opacity="0.7"/><rect x="69.0" y="230" width="1" height="42" fill="url(#tC)"/><rect x="76.0" y="234" width="1" height="38" fill="url(#tM)"/><rect x="73.8" y="232" width="1" height="30" fill="url(#tC)" opacity="0.5"/><rect x="63.2" y="815" width="1" height="48" fill="url(#tMu)"/><rect x="71.9" y="825" width="1.2" height="45" fill="url(#tCu)"/><rect x="59.9" y="835" width="1.2" height="45" fill="url(#tCu)" opacity="0.7"/><rect x="93.6" y="230" width="1" height="42" fill="url(#tC)"/><rect x="100.6" y="234" width="1" height="38" fill="url(#tM)"/><rect x="98.4" y="232" width="1" height="30" fill="url(#tC)" opacity="0.5"/><rect x="87.8" y="815" width="1" height="48" fill="url(#tMu)"/><rect x="96.5" y="825" width="1.2" height="45" fill="url(#tCu)"/><rect x="84.5" y="835" width="1.2" height="45" fill="url(#tCu)" opacity="0.7"/><rect x="118.3" y="230" width="1" height="42" fill="url(#tC)"/><rect x="125.3" y="234" width="1" height="38" fill="url(#tM)"/><rect x="123.1" y="232" width="1" height="30" fill="url(#tC)" opacity="0.5"/><rect x="112.5" y="815" width="1" height="48" fill="url(#tMu)"/><rect x="121.2" y="825" width="1.2" height="45" fill="url(#tCu)"/><rect x="109.2" y="835" width="1.2" height="45" fill="url(#tCu)" opacity="0.7"/><rect x="143.0" y="230" width="1" height="42" fill="url(#tC)"/><rect x="150.0" y="234" width="1" height="38" fill="url(#tM)"/><rect x="147.8" y="232" width="1" height="30" fill="url(#tC)" opacity="0.5"/><rect x="137.2" y="815" width="1" height="48" fill="url(#tMu)"/><rect x="145.9" y="825" width="1.2" height="45" fill="url(#tCu)"/><rect x="133.9" y="835" width="1.2" height="45" fill="url(#tCu)" opacity="0.7"/><rect x="167.7" y="230" width="1" height="42" fill="url(#tC)"/><rect x="174.7" y="234" width="1" height="38" fill="url(#tM)"/><rect x="172.5" y="232" width="1" height="30" fill="url(#tC)" opacity="0.5"/><rect x="161.9" y="815" width="1" height="48" fill="url(#tMu)"/><rect x="170.6" y="825" width="1.2" height="45" fill="url(#tCu)"/><rect x="158.6" y="835" width="1.2" height="45" fill="url(#tCu)" opacity="0.7"/><rect x="192.4" y="230" width="1" height="42" fill="url(#tC)"/><rect x="199.4" y="234" width="1" height="38" fill="url(#tM)"/><rect x="197.2" y="232" width="1" height="30" fill="url(#tC)" opacity="0.5"/><rect x="186.6" y="815" width="1" height="48" fill="url(#tMu)"/><rect x="195.3" y="825" width="1.2" height="45" fill="url(#tCu)"/><rect x="183.3" y="835" width="1.2" height="45" fill="url(#tCu)" opacity="0.7"/><rect x="217.0" y="230" width="1" height="42" fill="url(#tC)"/><rect x="224.0" y="234" width="1" height="38" fill="url(#tM)"/><rect x="221.8" y="232" width="1" height="30" fill="url(#tC)" opacity="0.5"/><rect x="211.2" y="815" width="1" height="48" fill="url(#tMu)"/><rect x="219.9" y="825" width="1.2" height="45" fill="url(#tCu)"/><rect x="207.9" y="835" width="1.2" height="45" fill="url(#tCu)" opacity="0.7"/><rect x="241.7" y="230" width="1" height="42" fill="url(#tC)"/><rect x="248.7" y="234" width="1" height="38" fill="url(#tM)"/><rect x="246.5" y="232" width="1" height="30" fill="url(#tC)" opacity="0.5"/><rect x="235.9" y="815" width="1" height="48" fill="url(#tMu)"/><rect x="244.6" y="825" width="1.2" height="45" fill="url(#tCu)"/><rect x="232.6" y="835" width="1.2" height="45" fill="url(#tCu)" opacity="0.7"/><rect x="266.4" y="230" width="1" height="42" fill="url(#tC)"/><rect x="273.4" y="234" width="1" height="38" fill="url(#tM)"/><rect x="271.2" y="232" width="1" height="30" fill="url(#tC)" opacity="0.5"/><rect x="260.6" y="815" width="1" height="48" fill="url(#tMu)"/><rect x="269.3" y="825" width="1.2" height="45" fill="url(#tCu)"/><rect x="257.3" y="835" width="1.2" height="45" fill="url(#tCu)" opacity="0.7"/><rect x="291.1" y="230" width="1" height="42" fill="url(#tC)"/><rect x="298.1" y="234" width="1" height="38" fill="url(#tM)"/><rect x="295.9" y="232" width="1" height="30" fill="url(#tC)" opacity="0.5"/><rect x="285.3" y="815" width="1" height="48" fill="url(#tMu)"/><rect x="294.0" y="825" width="1.2" height="45" fill="url(#tCu)"/><rect x="282.0" y="835" width="1.2" height="45" fill="url(#tCu)" opacity="0.7"/><rect x="315.8" y="230" width="1" height="42" fill="url(#tC)"/><rect x="322.8" y="234" width="1" height="38" fill="url(#tM)"/><rect x="320.6" y="232" width="1" height="30" fill="url(#tC)" opacity="0.5"/><rect x="310.0" y="815" width="1" height="48" fill="url(#tMu)"/><rect x="318.7" y="825" width="1.2" height="45" fill="url(#tCu)"/><rect x="306.7" y="835" width="1.2" height="45" fill="url(#tCu)" opacity="0.7"/><rect x="340.4" y="230" width="1" height="42" fill="url(#tC)"/><rect x="347.4" y="234" width="1" height="38" fill="url(#tM)"/><rect x="345.2" y="232" width="1" height="30" fill="url(#tC)" opacity="0.5"/><rect x="334.6" y="815" width="1" height="48" fill="url(#tMu)"/><rect x="343.3" y="825" width="1.2" height="45" fill="url(#tCu)"/><rect x="331.3" y="835" width="1.2" height="45" fill="url(#tCu)" opacity="0.7"/><rect x="365.1" y="230" width="1" height="42" fill="url(#tC)"/><rect x="372.1" y="234" width="1" height="38" fill="url(#tM)"/><rect x="369.9" y="232" width="1" height="30" fill="url(#tC)" opacity="0.5"/><rect x="359.3" y="815" width="1" height="48" fill="url(#tMu)"/><rect x="368.0" y="825" width="1.2" height="45" fill="url(#tCu)"/><rect x="356.0" y="835" width="1.2" height="45" fill="url(#tCu)" opacity="0.7"/><rect x="389.8" y="230" width="1" height="42" fill="url(#tC)"/><rect x="396.8" y="234" width="1" height="38" fill="url(#tM)"/><rect x="394.6" y="232" width="1" height="30" fill="url(#tC)" opacity="0.5"/><rect x="384.0" y="815" width="1" height="48" fill="url(#tMu)"/><rect x="392.7" y="825" width="1.2" height="45" fill="url(#tCu)"/><rect x="380.7" y="835" width="1.2" height="45" fill="url(#tCu)" opacity="0.7"/><rect x="414.5" y="230" width="1" height="42" fill="url(#tC)"/><rect x="421.5" y="234" width="1" height="38" fill="url(#tM)"/><rect x="419.3" y="232" width="1" height="30" fill="url(#tC)" opacity="0.5"/><rect x="408.7" y="815" width="1" height="48" fill="url(#tMu)"/><rect x="417.4" y="825" width="1.2" height="45" fill="url(#tCu)"/><rect x="405.4" y="835" width="1.2" height="45" fill="url(#tCu)" opacity="0.7"/><rect x="439.2" y="230" width="1" height="42" fill="url(#tC)"/><rect x="446.2" y="234" width="1" height="38" fill="url(#tM)"/><rect x="444.0" y="232" width="1" height="30" fill="url(#tC)" opacity="0.5"/><rect x="433.4" y="815" width="1" height="48" fill="url(#tMu)"/><rect x="442.1" y="825" width="1.2" height="45" fill="url(#tCu)"/><rect x="430.1" y="835" width="1.2" height="45" fill="url(#tCu)" opacity="0.7"/><rect x="463.8" y="230" width="1" height="42" fill="url(#tC)"/><rect x="470.8" y="234" width="1" height="38" fill="url(#tM)"/><rect x="468.6" y="232" width="1" height="30" fill="url(#tC)" opacity="0.5"/><rect x="458.0" y="815" width="1" height="48" fill="url(#tMu)"/><rect x="466.7" y="825" width="1.2" height="45" fill="url(#tCu)"/><rect x="454.7" y="835" width="1.2" height="45" fill="url(#tCu)" opacity="0.7"/><rect x="488.5" y="230" width="1" height="42" fill="url(#tC)"/><rect x="495.5" y="234" width="1" height="38" fill="url(#tM)"/><rect x="493.3" y="232" width="1" height="30" fill="url(#tC)" opacity="0.5"/><rect x="482.7" y="815" width="1" height="48" fill="url(#tMu)"/><rect x="491.4" y="825" width="1.2" height="45" fill="url(#tCu)"/><rect x="479.4" y="835" width="1.2" height="45" fill="url(#tCu)" opacity="0.7"/><rect x="513.2" y="230" width="1" height="42" fill="url(#tC)"/><rect x="520.2" y="234" width="1" height="38" fill="url(#tM)"/><rect x="518.0" y="232" width="1" height="30" fill="url(#tC)" opacity="0.5"/><rect x="507.4" y="815" width="1" height="48" fill="url(#tMu)"/><rect x="516.1" y="825" width="1.2" height="45" fill="url(#tCu)"/><rect x="504.1" y="835" width="1.2" height="45" fill="url(#tCu)" opacity="0.7"/><rect x="537.9" y="230" width="1" height="42" fill="url(#tC)"/><rect x="544.9" y="234" width="1" height="38" fill="url(#tM)"/><rect x="542.7" y="232" width="1" height="30" fill="url(#tC)" opacity="0.5"/><rect x="532.1" y="815" width="1" height="48" fill="url(#tMu)"/><rect x="540.8" y="825" width="1.2" height="45" fill="url(#tCu)"/><rect x="528.8" y="835" width="1.2" height="45" fill="url(#tCu)" opacity="0.7"/><rect x="562.6" y="230" width="1" height="42" fill="url(#tC)"/><rect x="569.6" y="234" width="1" height="38" fill="url(#tM)"/><rect x="567.4" y="232" width="1" height="30" fill="url(#tC)" opacity="0.5"/><rect x="556.8" y="815" width="1" height="48" fill="url(#tMu)"/><rect x="565.5" y="825" width="1.2" height="45" fill="url(#tCu)"/><rect x="553.5" y="835" width="1.2" height="45" fill="url(#tCu)" opacity="0.7"/><rect x="587.2" y="230" width="1" height="42" fill="url(#tC)"/><rect x="594.2" y="234" width="1" height="38" fill="url(#tM)"/><rect x="592.0" y="232" width="1" height="30" fill="url(#tC)" opacity="0.5"/><rect x="581.4" y="815" width="1" height="48" fill="url(#tMu)"/><rect x="590.1" y="825" width="1.2" height="45" fill="url(#tCu)"/><rect x="578.1" y="835" width="1.2" height="45" fill="url(#tCu)" opacity="0.7"/><rect x="611.9" y="230" width="1" height="42" fill="url(#tC)"/><rect x="618.9" y="234" width="1" height="38" fill="url(#tM)"/><rect x="616.7" y="232" width="1" height="30" fill="url(#tC)" opacity="0.5"/><rect x="606.1" y="815" width="1" height="48" fill="url(#tMu)"/><rect x="614.8" y="825" width="1.2" height="45" fill="url(#tCu)"/><rect x="602.8" y="835" width="1.2" height="45" fill="url(#tCu)" opacity="0.7"/><rect x="636.6" y="230" width="1" height="42" fill="url(#tC)"/><rect x="643.6" y="234" width="1" height="38" fill="url(#tM)"/><rect x="641.4" y="232" width="1" height="30" fill="url(#tC)" opacity="0.5"/><rect x="630.8" y="815" width="1" height="48" fill="url(#tMu)"/><rect x="639.5" y="825" width="1.2" height="45" fill="url(#tCu)"/><rect x="627.5" y="835" width="1.2" height="45" fill="url(#tCu)" opacity="0.7"/><rect x="661.3" y="230" width="1" height="42" fill="url(#tC)"/><rect x="668.3" y="234" width="1" height="38" fill="url(#tM)"/><rect x="666.1" y="232" width="1" height="30" fill="url(#tC)" opacity="0.5"/><rect x="655.5" y="815" width="1" height="48" fill="url(#tMu)"/><rect x="664.2" y="825" width="1.2" height="45" fill="url(#tCu)"/><rect x="652.2" y="835" width="1.2" height="45" fill="url(#tCu)" opacity="0.7"/><rect x="686.0" y="230" width="1" height="42" fill="url(#tC)"/><rect x="693.0" y="234" width="1" height="38" fill="url(#tM)"/><rect x="690.8" y="232" width="1" height="30" fill="url(#tC)" opacity="0.5"/><rect x="680.2" y="815" width="1" height="48" fill="url(#tMu)"/><rect x="688.9" y="825" width="1.2" height="45" fill="url(#tCu)"/><rect x="676.9" y="835" width="1.2" height="45" fill="url(#tCu)" opacity="0.7"/><rect x="710.6" y="230" width="1" height="42" fill="url(#tC)"/><rect x="717.6" y="234" width="1" height="38" fill="url(#tM)"/><rect x="715.4" y="232" width="1" height="30" fill="url(#tC)" opacity="0.5"/><rect x="704.8" y="815" width="1" height="48" fill="url(#tMu)"/><rect x="713.5" y="825" width="1.2" height="45" fill="url(#tCu)"/><rect x="701.5" y="835" width="1.2" height="45" fill="url(#tCu)" opacity="0.7"/><rect x="735.3" y="230" width="1" height="42" fill="url(#tC)"/><rect x="742.3" y="234" width="1" height="38" fill="url(#tM)"/><rect x="740.1" y="232" width="1" height="30" fill="url(#tC)" opacity="0.5"/><rect x="729.5" y="815" width="1" height="48" fill="url(#tMu)"/><rect x="738.2" y="825" width="1.2" height="45" fill="url(#tCu)"/><rect x="726.2" y="835" width="1.2" height="45" fill="url(#tCu)" opacity="0.7"/><rect x="760.0" y="230" width="1" height="42" fill="url(#tC)"/><rect x="767.0" y="234" width="1" height="38" fill="url(#tM)"/><rect x="764.8" y="232" width="1" height="30" fill="url(#tC)" opacity="0.5"/><rect x="754.2" y="815" width="1" height="48" fill="url(#tMu)"/><rect x="762.9" y="825" width="1.2" height="45" fill="url(#tCu)"/><rect x="750.9" y="835" width="1.2" height="45" fill="url(#tCu)" opacity="0.7"/><rect x="784.7" y="230" width="1" height="42" fill="url(#tC)"/><rect x="791.7" y="234" width="1" height="38" fill="url(#tM)"/><rect x="789.5" y="232" width="1" height="30" fill="url(#tC)" opacity="0.5"/><rect x="778.9" y="815" width="1" height="48" fill="url(#tMu)"/><rect x="787.6" y="825" width="1.2" height="45" fill="url(#tCu)"/><rect x="775.6" y="835" width="1.2" height="45" fill="url(#tCu)" opacity="0.7"/><rect x="809.4" y="230" width="1" height="42" fill="url(#tC)"/><rect x="816.4" y="234" width="1" height="38" fill="url(#tM)"/><rect x="814.2" y="232" width="1" height="30" fill="url(#tC)" opacity="0.5"/><rect x="803.6" y="815" width="1" height="48" fill="url(#tMu)"/><rect x="812.3" y="825" width="1.2" height="45" fill="url(#tCu)"/><rect x="800.3" y="835" width="1.2" height="45" fill="url(#tCu)" opacity="0.7"/><rect x="834.0" y="230" width="1" height="42" fill="url(#tC)"/><rect x="841.0" y="234" width="1" height="38" fill="url(#tM)"/><rect x="838.8" y="232" width="1" height="30" fill="url(#tC)" opacity="0.5"/><rect x="828.2" y="815" width="1" height="48" fill="url(#tMu)"/><rect x="836.9" y="825" width="1.2" height="45" fill="url(#tCu)"/><rect x="824.9" y="835" width="1.2" height="45" fill="url(#tCu)" opacity="0.7"/><rect x="858.7" y="230" width="1" height="42" fill="url(#tC)"/><rect x="865.7" y="234" width="1" height="38" fill="url(#tM)"/><rect x="863.5" y="232" width="1" height="30" fill="url(#tC)" opacity="0.5"/><rect x="852.9" y="815" width="1" height="48" fill="url(#tMu)"/><rect x="861.6" y="825" width="1.2" height="45" fill="url(#tCu)"/><rect x="849.6" y="835" width="1.2" height="45" fill="url(#tCu)" opacity="0.7"/><rect x="883.4" y="230" width="1" height="42" fill="url(#tC)"/><rect x="890.4" y="234" width="1" height="38" fill="url(#tM)"/><rect x="888.2" y="232" width="1" height="30" fill="url(#tC)" opacity="0.5"/><rect x="877.6" y="815" width="1" height="48" fill="url(#tMu)"/><rect x="886.3" y="825" width="1.2" height="45" fill="url(#tCu)"/><rect x="874.3" y="835" width="1.2" height="45" fill="url(#tCu)" opacity="0.7"/><rect x="908.1" y="230" width="1" height="42" fill="url(#tC)"/><rect x="915.1" y="234" width="1" height="38" fill="url(#tM)"/><rect x="912.9" y="232" width="1" height="30" fill="url(#tC)" opacity="0.5"/><rect x="902.3" y="815" width="1" height="48" fill="url(#tMu)"/><rect x="911.0" y="825" width="1.2" height="45" fill="url(#tCu)"/><rect x="899.0" y="835" width="1.2" height="45" fill="url(#tCu)" opacity="0.7"/><rect x="932.8" y="230" width="1" height="42" fill="url(#tC)"/><rect x="939.8" y="234" width="1" height="38" fill="url(#tM)"/><rect x="937.6" y="232" width="1" height="30" fill="url(#tC)" opacity="0.5"/><rect x="927.0" y="815" width="1" height="48" fill="url(#tMu)"/><rect x="935.7" y="825" width="1.2" height="45" fill="url(#tCu)"/><rect x="923.7" y="835" width="1.2" height="45" fill="url(#tCu)" opacity="0.7"/><rect x="957.4" y="230" width="1" height="42" fill="url(#tC)"/><rect x="964.4" y="234" width="1" height="38" fill="url(#tM)"/><rect x="962.2" y="232" width="1" height="30" fill="url(#tC)" opacity="0.5"/><rect x="951.6" y="815" width="1" height="48" fill="url(#tMu)"/><rect x="960.3" y="825" width="1.2" height="45" fill="url(#tCu)"/><rect x="948.3" y="835" width="1.2" height="45" fill="url(#tCu)" opacity="0.7"/><rect x="982.1" y="230" width="1" height="42" fill="url(#tC)"/><rect x="989.1" y="234" width="1" height="38" fill="url(#tM)"/><rect x="986.9" y="232" width="1" height="30" fill="url(#tC)" opacity="0.5"/><rect x="976.3" y="815" width="1" height="48" fill="url(#tMu)"/><rect x="985.0" y="825" width="1.2" height="45" fill="url(#tCu)"/><rect x="973.0" y="835" width="1.2" height="45" fill="url(#tCu)" opacity="0.7"/>
<g filter="url(#b2)">
<path d="M99,214 L111,203.5 L286,203.5 L286,213 L109,213 Z" fill="#eaea10" opacity="0.9"/>
<path d="M494,214 L506,203.5 L681,203.5 L681,213 L504,213 Z" fill="#eaea10" opacity="0.9"/>
<path d="M890,214 L902,203.5 L960,203.5 L960,213 L900,213 Z" fill="#eaea10" opacity="0.9"/>
</g>
<g filter="url(#b1)">
<path d="M97.3,210.5 L99.9,207.5 L102.5,210.5 L102.3,216 L99.9,221 L97.5,216 Z" fill="#ecec0c"/><path d="M110.4,204.0 L113.0,201.0 L115.6,204.0 L115.4,216 L113.0,221 L110.6,216 Z" fill="#ecec0c"/><path d="M122.0,205.5 L124.6,202.5 L127.2,205.5 L127.0,216 L124.6,221 L122.2,216 Z" fill="#ecec0c"/><path d="M135.1,203.7 L137.7,200.7 L140.3,203.7 L140.1,216 L137.7,221 L135.3,216 Z" fill="#ecec0c"/><path d="M146.7,205.1 L149.3,202.1 L151.9,205.1 L151.7,216 L149.3,221 L146.9,216 Z" fill="#ecec0c"/><path d="M159.8,204.6 L162.4,201.6 L165.0,204.6 L164.8,216 L162.4,221 L160.0,216 Z" fill="#ecec0c"/><path d="M171.4,203.7 L174.0,200.7 L176.6,203.7 L176.4,216 L174.0,221 L171.6,216 Z" fill="#ecec0c"/><path d="M184.5,205.0 L187.1,202.0 L189.7,205.0 L189.5,216 L187.1,221 L184.7,216 Z" fill="#ecec0c"/><path d="M196.1,203.6 L198.7,200.6 L201.3,203.6 L201.1,216 L198.7,221 L196.3,216 Z" fill="#ecec0c"/><path d="M209.1,204.8 L211.7,201.8 L214.3,204.8 L214.1,216 L211.7,221 L209.3,216 Z" fill="#ecec0c"/><path d="M220.7,203.7 L223.3,200.7 L225.9,203.7 L225.7,216 L223.3,221 L220.9,216 Z" fill="#ecec0c"/><path d="M233.8,203.8 L236.4,200.8 L239.0,203.8 L238.8,216 L236.4,221 L234.0,216 Z" fill="#ecec0c"/><path d="M245.4,204.8 L248.0,201.8 L250.6,204.8 L250.4,216 L248.0,221 L245.6,216 Z" fill="#ecec0c"/><path d="M258.5,206.0 L261.1,203.0 L263.7,206.0 L263.5,216 L261.1,221 L258.7,216 Z" fill="#ecec0c"/><path d="M270.1,203.9 L272.7,200.9 L275.3,203.9 L275.1,216 L272.7,221 L270.3,216 Z" fill="#ecec0c"/><path d="M283.2,204.2 L285.8,201.2 L288.4,204.2 L288.2,216 L285.8,221 L283.4,216 Z" fill="#ecec0c"/><path d="M492.2,211.4 L494.8,208.4 L497.4,211.4 L497.2,216 L494.8,221 L492.4,216 Z" fill="#ecec0c"/><path d="M505.3,206.3 L507.9,203.3 L510.5,206.3 L510.3,216 L507.9,221 L505.5,216 Z" fill="#ecec0c"/><path d="M516.9,205.2 L519.5,202.2 L522.1,205.2 L521.9,216 L519.5,221 L517.1,216 Z" fill="#ecec0c"/><path d="M530.0,204.7 L532.6,201.7 L535.2,204.7 L535.0,216 L532.6,221 L530.2,216 Z" fill="#ecec0c"/><path d="M541.6,206.4 L544.2,203.4 L546.8,206.4 L546.6,216 L544.2,221 L541.8,216 Z" fill="#ecec0c"/><path d="M554.7,203.6 L557.3,200.6 L559.9,203.6 L559.7,216 L557.3,221 L554.9,216 Z" fill="#ecec0c"/><path d="M566.3,206.1 L568.9,203.1 L571.5,206.1 L571.3,216 L568.9,221 L566.5,216 Z" fill="#ecec0c"/><path d="M579.3,204.4 L581.9,201.4 L584.5,204.4 L584.3,216 L581.9,221 L579.5,216 Z" fill="#ecec0c"/><path d="M590.9,203.9 L593.5,200.9 L596.1,203.9 L595.9,216 L593.5,221 L591.1,216 Z" fill="#ecec0c"/><path d="M604.0,203.9 L606.6,200.9 L609.2,203.9 L609.0,216 L606.6,221 L604.2,216 Z" fill="#ecec0c"/><path d="M615.6,204.4 L618.2,201.4 L620.8,204.4 L620.6,216 L618.2,221 L615.8,216 Z" fill="#ecec0c"/><path d="M628.7,205.9 L631.3,202.9 L633.9,205.9 L633.7,216 L631.3,221 L628.9,216 Z" fill="#ecec0c"/><path d="M640.3,204.0 L642.9,201.0 L645.5,204.0 L645.3,216 L642.9,221 L640.5,216 Z" fill="#ecec0c"/><path d="M653.4,205.2 L656.0,202.2 L658.6,205.2 L658.4,216 L656.0,221 L653.6,216 Z" fill="#ecec0c"/><path d="M665.0,205.4 L667.6,202.4 L670.2,205.4 L670.0,216 L667.6,221 L665.2,216 Z" fill="#ecec0c"/><path d="M678.1,204.6 L680.7,201.6 L683.3,204.6 L683.1,216 L680.7,221 L678.3,216 Z" fill="#ecec0c"/><path d="M887.1,211.1 L889.7,208.1 L892.3,211.1 L892.1,216 L889.7,221 L887.3,216 Z" fill="#ecec0c"/><path d="M900.2,203.7 L902.8,200.7 L905.4,203.7 L905.2,216 L902.8,221 L900.4,216 Z" fill="#ecec0c"/><path d="M911.8,203.7 L914.4,200.7 L917.0,203.7 L916.8,216 L914.4,221 L912.0,216 Z" fill="#ecec0c"/><path d="M924.9,204.1 L927.5,201.1 L930.1,204.1 L929.9,216 L927.5,221 L925.1,216 Z" fill="#ecec0c"/><path d="M936.5,205.5 L939.1,202.5 L941.7,205.5 L941.5,216 L939.1,221 L936.7,216 Z" fill="#ecec0c"/><path d="M949.5,204.8 L952.1,201.8 L954.7,204.8 L954.5,216 L952.1,221 L949.7,216 Z" fill="#ecec0c"/>
</g>
<g filter="url(#b15)">
<rect x="-8.1" y="207" width="7.4" height="25" rx="3.6" fill="#00e2e0"/><ellipse cx="7.6" cy="209.8" rx="2.6" ry="2.6" fill="#12b4cc"/><rect x="16.6" y="207" width="7.4" height="25" rx="3.6" fill="#00e2e0"/><ellipse cx="32.3" cy="209.8" rx="2.6" ry="2.6" fill="#12b4cc"/><rect x="41.3" y="207" width="7.4" height="25" rx="3.6" fill="#00e2e0"/><ellipse cx="57.0" cy="209.8" rx="2.6" ry="2.6" fill="#12b4cc"/><rect x="66.0" y="207" width="7.4" height="25" rx="3.6" fill="#00e2e0"/><ellipse cx="81.7" cy="209.8" rx="2.6" ry="2.6" fill="#12b4cc"/><rect x="90.6" y="207" width="7.4" height="25" rx="3.6" fill="#00e2e0"/><ellipse cx="106.3" cy="209.8" rx="2.6" ry="2.6" fill="#12b4cc"/><rect x="115.3" y="207" width="7.4" height="25" rx="3.6" fill="#00e2e0"/><ellipse cx="131.0" cy="209.8" rx="2.6" ry="2.6" fill="#12b4cc"/><rect x="140.0" y="207" width="7.4" height="25" rx="3.6" fill="#00e2e0"/><ellipse cx="155.7" cy="209.8" rx="2.6" ry="2.6" fill="#12b4cc"/><rect x="164.7" y="207" width="7.4" height="25" rx="3.6" fill="#00e2e0"/><ellipse cx="180.4" cy="209.8" rx="2.6" ry="2.6" fill="#12b4cc"/><rect x="189.4" y="207" width="7.4" height="25" rx="3.6" fill="#00e2e0"/><ellipse cx="205.1" cy="209.8" rx="2.6" ry="2.6" fill="#12b4cc"/><rect x="214.0" y="207" width="7.4" height="25" rx="3.6" fill="#00e2e0"/><ellipse cx="229.7" cy="209.8" rx="2.6" ry="2.6" fill="#12b4cc"/><rect x="238.7" y="207" width="7.4" height="25" rx="3.6" fill="#00e2e0"/><ellipse cx="254.4" cy="209.8" rx="2.6" ry="2.6" fill="#12b4cc"/><rect x="263.4" y="207" width="7.4" height="25" rx="3.6" fill="#00e2e0"/><ellipse cx="279.1" cy="209.8" rx="2.6" ry="2.6" fill="#12b4cc"/><rect x="288.1" y="207" width="7.4" height="25" rx="3.6" fill="#00e2e0"/><ellipse cx="303.8" cy="209.8" rx="2.6" ry="2.6" fill="#12b4cc"/><rect x="312.8" y="207" width="7.4" height="25" rx="3.6" fill="#00e2e0"/><ellipse cx="328.5" cy="209.8" rx="2.6" ry="2.6" fill="#12b4cc"/><rect x="337.4" y="207" width="7.4" height="25" rx="3.6" fill="#00e2e0"/><ellipse cx="353.1" cy="209.8" rx="2.6" ry="2.6" fill="#12b4cc"/><rect x="362.1" y="207" width="7.4" height="25" rx="3.6" fill="#00e2e0"/><ellipse cx="377.8" cy="209.8" rx="2.6" ry="2.6" fill="#12b4cc"/><rect x="386.8" y="207" width="7.4" height="25" rx="3.6" fill="#00e2e0"/><ellipse cx="402.5" cy="209.8" rx="2.6" ry="2.6" fill="#12b4cc"/><rect x="411.5" y="207" width="7.4" height="25" rx="3.6" fill="#00e2e0"/><ellipse cx="427.2" cy="209.8" rx="2.6" ry="2.6" fill="#12b4cc"/><rect x="436.2" y="207" width="7.4" height="25" rx="3.6" fill="#00e2e0"/><ellipse cx="451.9" cy="209.8" rx="2.6" ry="2.6" fill="#12b4cc"/><rect x="460.8" y="207" width="7.4" height="25" rx="3.6" fill="#00e2e0"/><ellipse cx="476.5" cy="209.8" rx="2.6" ry="2.6" fill="#12b4cc"/><rect x="485.5" y="207" width="7.4" height="25" rx="3.6" fill="#00e2e0"/><ellipse cx="501.2" cy="209.8" rx="2.6" ry="2.6" fill="#12b4cc"/><rect x="510.2" y="207" width="7.4" height="25" rx="3.6" fill="#00e2e0"/><ellipse cx="525.9" cy="209.8" rx="2.6" ry="2.6" fill="#12b4cc"/><rect x="534.9" y="207" width="7.4" height="25" rx="3.6" fill="#00e2e0"/><ellipse cx="550.6" cy="209.8" rx="2.6" ry="2.6" fill="#12b4cc"/><rect x="559.6" y="207" width="7.4" height="25" rx="3.6" fill="#00e2e0"/><ellipse cx="575.3" cy="209.8" rx="2.6" ry="2.6" fill="#12b4cc"/><rect x="584.2" y="207" width="7.4" height="25" rx="3.6" fill="#00e2e0"/><ellipse cx="599.9" cy="209.8" rx="2.6" ry="2.6" fill="#12b4cc"/><rect x="608.9" y="207" width="7.4" height="25" rx="3.6" fill="#00e2e0"/><ellipse cx="624.6" cy="209.8" rx="2.6" ry="2.6" fill="#12b4cc"/><rect x="633.6" y="207" width="7.4" height="25" rx="3.6" fill="#00e2e0"/><ellipse cx="649.3" cy="209.8" rx="2.6" ry="2.6" fill="#12b4cc"/><rect x="658.3" y="207" width="7.4" height="25" rx="3.6" fill="#00e2e0"/><ellipse cx="674.0" cy="209.8" rx="2.6" ry="2.6" fill="#12b4cc"/><rect x="683.0" y="207" width="7.4" height="25" rx="3.6" fill="#00e2e0"/><ellipse cx="698.7" cy="209.8" rx="2.6" ry="2.6" fill="#12b4cc"/><rect x="707.6" y="207" width="7.4" height="25" rx="3.6" fill="#00e2e0"/><ellipse cx="723.3" cy="209.8" rx="2.6" ry="2.6" fill="#12b4cc"/><rect x="732.3" y="207" width="7.4" height="25" rx="3.6" fill="#00e2e0"/><ellipse cx="748.0" cy="209.8" rx="2.6" ry="2.6" fill="#12b4cc"/><rect x="757.0" y="207" width="7.4" height="25" rx="3.6" fill="#00e2e0"/><ellipse cx="772.7" cy="209.8" rx="2.6" ry="2.6" fill="#12b4cc"/><rect x="781.7" y="207" width="7.4" height="25" rx="3.6" fill="#00e2e0"/><ellipse cx="797.4" cy="209.8" rx="2.6" ry="2.6" fill="#12b4cc"/><rect x="806.4" y="207" width="7.4" height="25" rx="3.6" fill="#00e2e0"/><ellipse cx="822.1" cy="209.8" rx="2.6" ry="2.6" fill="#12b4cc"/><rect x="831.0" y="207" width="7.4" height="25" rx="3.6" fill="#00e2e0"/><ellipse cx="846.7" cy="209.8" rx="2.6" ry="2.6" fill="#12b4cc"/><rect x="855.7" y="207" width="7.4" height="25" rx="3.6" fill="#00e2e0"/><ellipse cx="871.4" cy="209.8" rx="2.6" ry="2.6" fill="#12b4cc"/><rect x="880.4" y="207" width="7.4" height="25" rx="3.6" fill="#00e2e0"/><ellipse cx="896.1" cy="209.8" rx="2.6" ry="2.6" fill="#12b4cc"/><rect x="905.1" y="207" width="7.4" height="25" rx="3.6" fill="#00e2e0"/><ellipse cx="920.8" cy="209.8" rx="2.6" ry="2.6" fill="#12b4cc"/><rect x="929.8" y="207" width="7.4" height="25" rx="3.6" fill="#00e2e0"/><ellipse cx="945.5" cy="209.8" rx="2.6" ry="2.6" fill="#12b4cc"/><rect x="954.4" y="207" width="7.4" height="25" rx="3.6" fill="#00e2e0"/><ellipse cx="970.1" cy="209.8" rx="2.6" ry="2.6" fill="#12b4cc"/><rect x="979.1" y="207" width="7.4" height="25" rx="3.6" fill="#00e2e0"/><ellipse cx="994.8" cy="209.8" rx="2.6" ry="2.6" fill="#12b4cc"/>
</g>
<g filter="url(#b2)">
<ellipse cx="0.3" cy="892.5" rx="3.5" ry="14" fill="#00e8e8" transform="rotate(-4 0.3 892.5)"/><ellipse cx="12.6" cy="892.5" rx="3.5" ry="14" fill="#00e8e8" transform="rotate(4 12.6 892.5)"/><ellipse cx="24.9" cy="892.5" rx="3.5" ry="14" fill="#00e8e8" transform="rotate(-4 24.9 892.5)"/><ellipse cx="37.3" cy="892.5" rx="3.5" ry="14" fill="#00e8e8" transform="rotate(4 37.3 892.5)"/><ellipse cx="49.6" cy="892.5" rx="3.5" ry="14" fill="#00e8e8" transform="rotate(-4 49.6 892.5)"/><ellipse cx="62.0" cy="892.5" rx="3.5" ry="14" fill="#00e8e8" transform="rotate(4 62.0 892.5)"/><ellipse cx="74.3" cy="892.5" rx="3.5" ry="14" fill="#00e8e8" transform="rotate(-4 74.3 892.5)"/><ellipse cx="86.6" cy="892.5" rx="3.5" ry="14" fill="#00e8e8" transform="rotate(4 86.6 892.5)"/><ellipse cx="99.0" cy="892.5" rx="3.5" ry="14" fill="#00e8e8" transform="rotate(-4 99.0 892.5)"/><ellipse cx="111.3" cy="892.5" rx="3.5" ry="14" fill="#00e8e8" transform="rotate(4 111.3 892.5)"/><ellipse cx="123.7" cy="892.5" rx="3.5" ry="14" fill="#00e8e8" transform="rotate(-4 123.7 892.5)"/><ellipse cx="136.0" cy="892.5" rx="3.5" ry="14" fill="#00e8e8" transform="rotate(4 136.0 892.5)"/><ellipse cx="148.3" cy="892.5" rx="3.5" ry="14" fill="#00e8e8" transform="rotate(-4 148.3 892.5)"/><ellipse cx="160.7" cy="892.5" rx="3.5" ry="14" fill="#00e8e8" transform="rotate(4 160.7 892.5)"/><ellipse cx="173.0" cy="892.5" rx="3.5" ry="14" fill="#00e8e8" transform="rotate(-4 173.0 892.5)"/><ellipse cx="185.4" cy="892.5" rx="3.5" ry="14" fill="#00e8e8" transform="rotate(4 185.4 892.5)"/><ellipse cx="197.7" cy="892.5" rx="3.5" ry="14" fill="#00e8e8" transform="rotate(-4 197.7 892.5)"/><ellipse cx="210.0" cy="892.5" rx="3.5" ry="14" fill="#00e8e8" transform="rotate(4 210.0 892.5)"/><ellipse cx="222.4" cy="892.5" rx="3.5" ry="14" fill="#00e8e8" transform="rotate(-4 222.4 892.5)"/><ellipse cx="234.7" cy="892.5" rx="3.5" ry="14" fill="#00e8e8" transform="rotate(4 234.7 892.5)"/><ellipse cx="247.1" cy="892.5" rx="3.5" ry="14" fill="#00e8e8" transform="rotate(-4 247.1 892.5)"/><ellipse cx="259.4" cy="892.5" rx="3.5" ry="14" fill="#00e8e8" transform="rotate(4 259.4 892.5)"/><ellipse cx="271.7" cy="892.5" rx="3.5" ry="14" fill="#00e8e8" transform="rotate(-4 271.7 892.5)"/><ellipse cx="284.1" cy="892.5" rx="3.5" ry="14" fill="#00e8e8" transform="rotate(4 284.1 892.5)"/><ellipse cx="296.4" cy="892.5" rx="3.5" ry="14" fill="#00e8e8" transform="rotate(-4 296.4 892.5)"/><ellipse cx="308.8" cy="892.5" rx="3.5" ry="14" fill="#00e8e8" transform="rotate(4 308.8 892.5)"/><ellipse cx="321.1" cy="892.5" rx="3.5" ry="14" fill="#00e8e8" transform="rotate(-4 321.1 892.5)"/><ellipse cx="333.4" cy="892.5" rx="3.5" ry="14" fill="#00e8e8" transform="rotate(4 333.4 892.5)"/><ellipse cx="345.8" cy="892.5" rx="3.5" ry="14" fill="#00e8e8" transform="rotate(-4 345.8 892.5)"/><ellipse cx="358.1" cy="892.5" rx="3.5" ry="14" fill="#00e8e8" transform="rotate(4 358.1 892.5)"/><ellipse cx="370.5" cy="892.5" rx="3.5" ry="14" fill="#00e8e8" transform="rotate(-4 370.5 892.5)"/><ellipse cx="382.8" cy="892.5" rx="3.5" ry="14" fill="#00e8e8" transform="rotate(4 382.8 892.5)"/><ellipse cx="395.1" cy="892.5" rx="3.5" ry="14" fill="#00e8e8" transform="rotate(-4 395.1 892.5)"/><ellipse cx="407.5" cy="892.5" rx="3.5" ry="14" fill="#00e8e8" transform="rotate(4 407.5 892.5)"/><ellipse cx="419.8" cy="892.5" rx="3.5" ry="14" fill="#00e8e8" transform="rotate(-4 419.8 892.5)"/><ellipse cx="432.2" cy="892.5" rx="3.5" ry="14" fill="#00e8e8" transform="rotate(4 432.2 892.5)"/><ellipse cx="444.5" cy="892.5" rx="3.5" ry="14" fill="#00e8e8" transform="rotate(-4 444.5 892.5)"/><ellipse cx="456.8" cy="892.5" rx="3.5" ry="14" fill="#00e8e8" transform="rotate(4 456.8 892.5)"/><ellipse cx="469.2" cy="892.5" rx="3.5" ry="14" fill="#00e8e8" transform="rotate(-4 469.2 892.5)"/><ellipse cx="481.5" cy="892.5" rx="3.5" ry="14" fill="#00e8e8" transform="rotate(4 481.5 892.5)"/><ellipse cx="493.9" cy="892.5" rx="3.5" ry="14" fill="#00e8e8" transform="rotate(-4 493.9 892.5)"/><ellipse cx="506.2" cy="892.5" rx="3.5" ry="14" fill="#00e8e8" transform="rotate(4 506.2 892.5)"/><ellipse cx="518.5" cy="892.5" rx="3.5" ry="14" fill="#00e8e8" transform="rotate(-4 518.5 892.5)"/><ellipse cx="530.9" cy="892.5" rx="3.5" ry="14" fill="#00e8e8" transform="rotate(4 530.9 892.5)"/><ellipse cx="543.2" cy="892.5" rx="3.5" ry="14" fill="#00e8e8" transform="rotate(-4 543.2 892.5)"/><ellipse cx="555.6" cy="892.5" rx="3.5" ry="14" fill="#00e8e8" transform="rotate(4 555.6 892.5)"/><ellipse cx="567.9" cy="892.5" rx="3.5" ry="14" fill="#00e8e8" transform="rotate(-4 567.9 892.5)"/><ellipse cx="580.2" cy="892.5" rx="3.5" ry="14" fill="#00e8e8" transform="rotate(4 580.2 892.5)"/><ellipse cx="592.6" cy="892.5" rx="3.5" ry="14" fill="#00e8e8" transform="rotate(-4 592.6 892.5)"/><ellipse cx="604.9" cy="892.5" rx="3.5" ry="14" fill="#00e8e8" transform="rotate(4 604.9 892.5)"/><ellipse cx="617.3" cy="892.5" rx="3.5" ry="14" fill="#00e8e8" transform="rotate(-4 617.3 892.5)"/><ellipse cx="629.6" cy="892.5" rx="3.5" ry="14" fill="#00e8e8" transform="rotate(4 629.6 892.5)"/><ellipse cx="641.9" cy="892.5" rx="3.5" ry="14" fill="#00e8e8" transform="rotate(-4 641.9 892.5)"/><ellipse cx="654.3" cy="892.5" rx="3.5" ry="14" fill="#00e8e8" transform="rotate(4 654.3 892.5)"/><ellipse cx="666.6" cy="892.5" rx="3.5" ry="14" fill="#00e8e8" transform="rotate(-4 666.6 892.5)"/><ellipse cx="679.0" cy="892.5" rx="3.5" ry="14" fill="#00e8e8" transform="rotate(4 679.0 892.5)"/><ellipse cx="691.3" cy="892.5" rx="3.5" ry="14" fill="#00e8e8" transform="rotate(-4 691.3 892.5)"/><ellipse cx="703.6" cy="892.5" rx="3.5" ry="14" fill="#00e8e8" transform="rotate(4 703.6 892.5)"/><ellipse cx="716.0" cy="892.5" rx="3.5" ry="14" fill="#00e8e8" transform="rotate(-4 716.0 892.5)"/><ellipse cx="728.3" cy="892.5" rx="3.5" ry="14" fill="#00e8e8" transform="rotate(4 728.3 892.5)"/><ellipse cx="740.7" cy="892.5" rx="3.5" ry="14" fill="#00e8e8" transform="rotate(-4 740.7 892.5)"/><ellipse cx="753.0" cy="892.5" rx="3.5" ry="14" fill="#00e8e8" transform="rotate(4 753.0 892.5)"/><ellipse cx="765.3" cy="892.5" rx="3.5" ry="14" fill="#00e8e8" transform="rotate(-4 765.3 892.5)"/><ellipse cx="777.7" cy="892.5" rx="3.5" ry="14" fill="#00e8e8" transform="rotate(4 777.7 892.5)"/><ellipse cx="790.0" cy="892.5" rx="3.5" ry="14" fill="#00e8e8" transform="rotate(-4 790.0 892.5)"/><ellipse cx="802.4" cy="892.5" rx="3.5" ry="14" fill="#00e8e8" transform="rotate(4 802.4 892.5)"/><ellipse cx="814.7" cy="892.5" rx="3.5" ry="14" fill="#00e8e8" transform="rotate(-4 814.7 892.5)"/><ellipse cx="827.0" cy="892.5" rx="3.5" ry="14" fill="#00e8e8" transform="rotate(4 827.0 892.5)"/><ellipse cx="839.4" cy="892.5" rx="3.5" ry="14" fill="#00e8e8" transform="rotate(-4 839.4 892.5)"/><ellipse cx="851.7" cy="892.5" rx="3.5" ry="14" fill="#00e8e8" transform="rotate(4 851.7 892.5)"/><ellipse cx="864.1" cy="892.5" rx="3.5" ry="14" fill="#00e8e8" transform="rotate(-4 864.1 892.5)"/><ellipse cx="876.4" cy="892.5" rx="3.5" ry="14" fill="#00e8e8" transform="rotate(4 876.4 892.5)"/><ellipse cx="888.7" cy="892.5" rx="3.5" ry="14" fill="#00e8e8" transform="rotate(-4 888.7 892.5)"/><ellipse cx="901.1" cy="892.5" rx="3.5" ry="14" fill="#00e8e8" transform="rotate(4 901.1 892.5)"/><ellipse cx="913.4" cy="892.5" rx="3.5" ry="14" fill="#00e8e8" transform="rotate(-4 913.4 892.5)"/><ellipse cx="925.8" cy="892.5" rx="3.5" ry="14" fill="#00e8e8" transform="rotate(4 925.8 892.5)"/><ellipse cx="938.1" cy="892.5" rx="3.5" ry="14" fill="#00e8e8" transform="rotate(-4 938.1 892.5)"/><ellipse cx="950.4" cy="892.5" rx="3.5" ry="14" fill="#00e8e8" transform="rotate(4 950.4 892.5)"/><ellipse cx="962.8" cy="892.5" rx="3.5" ry="14" fill="#00e8e8" transform="rotate(-4 962.8 892.5)"/><ellipse cx="975.1" cy="892.5" rx="3.5" ry="14" fill="#00e8e8" transform="rotate(4 975.1 892.5)"/><ellipse cx="987.5" cy="892.5" rx="3.5" ry="14" fill="#00e8e8" transform="rotate(-4 987.5 892.5)"/>
</g>
<g filter="url(#b15)">
<ellipse cx="6.4" cy="885" rx="2.7" ry="9" fill="#dce400"/><ellipse cx="18.8" cy="885" rx="2.7" ry="9" fill="#dce400"/><ellipse cx="31.1" cy="885" rx="2.7" ry="9" fill="#dce400"/><ellipse cx="43.5" cy="885" rx="2.7" ry="9" fill="#dce400"/><ellipse cx="55.8" cy="885" rx="2.7" ry="9" fill="#dce400"/><ellipse cx="68.1" cy="885" rx="2.7" ry="9" fill="#dce400"/><ellipse cx="80.5" cy="885" rx="2.7" ry="9" fill="#dce400"/><ellipse cx="302.6" cy="885" rx="2.7" ry="9" fill="#dce400"/><ellipse cx="314.9" cy="885" rx="2.7" ry="9" fill="#dce400"/><ellipse cx="327.3" cy="885" rx="2.7" ry="9" fill="#dce400"/><ellipse cx="339.6" cy="885" rx="2.7" ry="9" fill="#dce400"/><ellipse cx="352.0" cy="885" rx="2.7" ry="9" fill="#dce400"/><ellipse cx="364.3" cy="885" rx="2.7" ry="9" fill="#dce400"/><ellipse cx="376.6" cy="885" rx="2.7" ry="9" fill="#dce400"/><ellipse cx="389.0" cy="885" rx="2.7" ry="9" fill="#dce400"/><ellipse cx="401.3" cy="885" rx="2.7" ry="9" fill="#dce400"/><ellipse cx="413.7" cy="885" rx="2.7" ry="9" fill="#dce400"/><ellipse cx="426.0" cy="885" rx="2.7" ry="9" fill="#dce400"/><ellipse cx="438.3" cy="885" rx="2.7" ry="9" fill="#dce400"/><ellipse cx="450.7" cy="885" rx="2.7" ry="9" fill="#dce400"/><ellipse cx="463.0" cy="885" rx="2.7" ry="9" fill="#dce400"/><ellipse cx="475.4" cy="885" rx="2.7" ry="9" fill="#dce400"/><ellipse cx="697.5" cy="885" rx="2.7" ry="9" fill="#dce400"/><ellipse cx="709.8" cy="885" rx="2.7" ry="9" fill="#dce400"/><ellipse cx="722.1" cy="885" rx="2.7" ry="9" fill="#dce400"/><ellipse cx="734.5" cy="885" rx="2.7" ry="9" fill="#dce400"/><ellipse cx="746.8" cy="885" rx="2.7" ry="9" fill="#dce400"/><ellipse cx="759.2" cy="885" rx="2.7" ry="9" fill="#dce400"/><ellipse cx="771.5" cy="885" rx="2.7" ry="9" fill="#dce400"/><ellipse cx="783.9" cy="885" rx="2.7" ry="9" fill="#dce400"/><ellipse cx="796.2" cy="885" rx="2.7" ry="9" fill="#dce400"/><ellipse cx="808.5" cy="885" rx="2.7" ry="9" fill="#dce400"/><ellipse cx="820.9" cy="885" rx="2.7" ry="9" fill="#dce400"/><ellipse cx="833.2" cy="885" rx="2.7" ry="9" fill="#dce400"/><ellipse cx="845.5" cy="885" rx="2.7" ry="9" fill="#dce400"/><ellipse cx="857.9" cy="885" rx="2.7" ry="9" fill="#dce400"/><ellipse cx="870.2" cy="885" rx="2.7" ry="9" fill="#dce400"/>
</g>
<g filter="url(#b15)">
<rect x="-6.1" y="-10.6" width="12.3" height="21.4" rx="4.5" transform="translate(7.9,224.4) skewX(-6)" fill="#ff00e6"/><path d="M1.9,228 L2.3,240 L6.9,233 Z" fill="#e000c8" opacity="0.8"/><rect x="-6.1" y="-9.3" width="12.3" height="18.8" rx="4.5" transform="translate(-4.7,870.6) skewX(7)" fill="#fa00e0"/><path d="M-11.3,866 L-11.5,857 L-6.7,862.5 Z" fill="#e000c8" opacity="0.7"/><rect x="-6.1" y="-10.6" width="12.3" height="21.4" rx="4.5" transform="translate(32.6,224.4) skewX(-6)" fill="#ff00e6"/><path d="M26.6,228 L27.0,240 L31.6,233 Z" fill="#e000c8" opacity="0.8"/><rect x="-6.1" y="-9.3" width="12.3" height="18.8" rx="4.5" transform="translate(20.0,870.6) skewX(7)" fill="#fa00e0"/><path d="M13.4,866 L13.2,857 L18.0,862.5 Z" fill="#e000c8" opacity="0.7"/><rect x="-6.1" y="-10.6" width="12.3" height="21.4" rx="4.5" transform="translate(57.3,224.4) skewX(-6)" fill="#ff00e6"/><path d="M51.3,228 L51.7,240 L56.3,233 Z" fill="#e000c8" opacity="0.8"/><rect x="-6.1" y="-9.3" width="12.3" height="18.8" rx="4.5" transform="translate(44.7,870.6) skewX(7)" fill="#fa00e0"/><path d="M38.1,866 L37.9,857 L42.7,862.5 Z" fill="#e000c8" opacity="0.7"/><rect x="-6.1" y="-10.6" width="12.3" height="21.4" rx="4.5" transform="translate(82.0,224.4) skewX(-6)" fill="#ff00e6"/><path d="M76.0,228 L76.4,240 L81.0,233 Z" fill="#e000c8" opacity="0.8"/><rect x="-6.1" y="-9.3" width="12.3" height="18.8" rx="4.5" transform="translate(69.4,870.6) skewX(7)" fill="#fa00e0"/><path d="M62.8,866 L62.6,857 L67.4,862.5 Z" fill="#e000c8" opacity="0.7"/><rect x="-6.1" y="-10.6" width="12.3" height="21.4" rx="4.5" transform="translate(106.6,224.4) skewX(-6)" fill="#ff00e6"/><path d="M100.6,228 L101.0,240 L105.6,233 Z" fill="#e000c8" opacity="0.8"/><rect x="-6.1" y="-9.3" width="12.3" height="18.8" rx="4.5" transform="translate(94.0,870.6) skewX(7)" fill="#fa00e0"/><path d="M87.4,866 L87.2,857 L92.0,862.5 Z" fill="#e000c8" opacity="0.7"/><rect x="-6.1" y="-10.6" width="12.3" height="21.4" rx="4.5" transform="translate(131.3,224.4) skewX(-6)" fill="#ff00e6"/><path d="M125.3,228 L125.7,240 L130.3,233 Z" fill="#e000c8" opacity="0.8"/><rect x="-6.1" y="-9.3" width="12.3" height="18.8" rx="4.5" transform="translate(118.7,870.6) skewX(7)" fill="#fa00e0"/><path d="M112.1,866 L111.9,857 L116.7,862.5 Z" fill="#e000c8" opacity="0.7"/><rect x="-6.1" y="-10.6" width="12.3" height="21.4" rx="4.5" transform="translate(156.0,224.4) skewX(-6)" fill="#ff00e6"/><path d="M150.0,228 L150.4,240 L155.0,233 Z" fill="#e000c8" opacity="0.8"/><rect x="-6.1" y="-9.3" width="12.3" height="18.8" rx="4.5" transform="translate(143.4,870.6) skewX(7)" fill="#fa00e0"/><path d="M136.8,866 L136.6,857 L141.4,862.5 Z" fill="#e000c8" opacity="0.7"/><rect x="-6.1" y="-10.6" width="12.3" height="21.4" rx="4.5" transform="translate(180.7,224.4) skewX(-6)" fill="#ff00e6"/><path d="M174.7,228 L175.1,240 L179.7,233 Z" fill="#e000c8" opacity="0.8"/><rect x="-6.1" y="-9.3" width="12.3" height="18.8" rx="4.5" transform="translate(168.1,870.6) skewX(7)" fill="#fa00e0"/><path d="M161.5,866 L161.3,857 L166.1,862.5 Z" fill="#e000c8" opacity="0.7"/><rect x="-6.1" y="-10.6" width="12.3" height="21.4" rx="4.5" transform="translate(205.4,224.4) skewX(-6)" fill="#ff00e6"/><path d="M199.4,228 L199.8,240 L204.4,233 Z" fill="#e000c8" opacity="0.8"/><rect x="-6.1" y="-9.3" width="12.3" height="18.8" rx="4.5" transform="translate(192.8,870.6) skewX(7)" fill="#fa00e0"/><path d="M186.2,866 L186.0,857 L190.8,862.5 Z" fill="#e000c8" opacity="0.7"/><rect x="-6.1" y="-10.6" width="12.3" height="21.4" rx="4.5" transform="translate(230.0,224.4) skewX(-6)" fill="#ff00e6"/><path d="M224.0,228 L224.4,240 L229.0,233 Z" fill="#e000c8" opacity="0.8"/><rect x="-6.1" y="-9.3" width="12.3" height="18.8" rx="4.5" transform="translate(217.4,870.6) skewX(7)" fill="#fa00e0"/><path d="M210.8,866 L210.6,857 L215.4,862.5 Z" fill="#e000c8" opacity="0.7"/><rect x="-6.1" y="-10.6" width="12.3" height="21.4" rx="4.5" transform="translate(254.7,224.4) skewX(-6)" fill="#ff00e6"/><path d="M248.7,228 L249.1,240 L253.7,233 Z" fill="#e000c8" opacity="0.8"/><rect x="-6.1" y="-9.3" width="12.3" height="18.8" rx="4.5" transform="translate(242.1,870.6) skewX(7)" fill="#fa00e0"/><path d="M235.5,866 L235.3,857 L240.1,862.5 Z" fill="#e000c8" opacity="0.7"/><rect x="-6.1" y="-10.6" width="12.3" height="21.4" rx="4.5" transform="translate(279.4,224.4) skewX(-6)" fill="#ff00e6"/><path d="M273.4,228 L273.8,240 L278.4,233 Z" fill="#e000c8" opacity="0.8"/><rect x="-6.1" y="-9.3" width="12.3" height="18.8" rx="4.5" transform="translate(266.8,870.6) skewX(7)" fill="#fa00e0"/><path d="M260.2,866 L260.0,857 L264.8,862.5 Z" fill="#e000c8" opacity="0.7"/><rect x="-6.1" y="-10.6" width="12.3" height="21.4" rx="4.5" transform="translate(304.1,224.4) skewX(-6)" fill="#ff00e6"/><path d="M298.1,228 L298.5,240 L303.1,233 Z" fill="#e000c8" opacity="0.8"/><rect x="-6.1" y="-9.3" width="12.3" height="18.8" rx="4.5" transform="translate(291.5,870.6) skewX(7)" fill="#fa00e0"/><path d="M284.9,866 L284.7,857 L289.5,862.5 Z" fill="#e000c8" opacity="0.7"/><rect x="-6.1" y="-10.6" width="12.3" height="21.4" rx="4.5" transform="translate(328.8,224.4) skewX(-6)" fill="#ff00e6"/><path d="M322.8,228 L323.2,240 L327.8,233 Z" fill="#e000c8" opacity="0.8"/><rect x="-6.1" y="-9.3" width="12.3" height="18.8" rx="4.5" transform="translate(316.2,870.6) skewX(7)" fill="#fa00e0"/><path d="M309.6,866 L309.4,857 L314.2,862.5 Z" fill="#e000c8" opacity="0.7"/><rect x="-6.1" y="-10.6" width="12.3" height="21.4" rx="4.5" transform="translate(353.4,224.4) skewX(-6)" fill="#ff00e6"/><path d="M347.4,228 L347.8,240 L352.4,233 Z" fill="#e000c8" opacity="0.8"/><rect x="-6.1" y="-9.3" width="12.3" height="18.8" rx="4.5" transform="translate(340.8,870.6) skewX(7)" fill="#fa00e0"/><path d="M334.2,866 L334.0,857 L338.8,862.5 Z" fill="#e000c8" opacity="0.7"/><rect x="-6.1" y="-10.6" width="12.3" height="21.4" rx="4.5" transform="translate(378.1,224.4) skewX(-6)" fill="#ff00e6"/><path d="M372.1,228 L372.5,240 L377.1,233 Z" fill="#e000c8" opacity="0.8"/><rect x="-6.1" y="-9.3" width="12.3" height="18.8" rx="4.5" transform="translate(365.5,870.6) skewX(7)" fill="#fa00e0"/><path d="M358.9,866 L358.7,857 L363.5,862.5 Z" fill="#e000c8" opacity="0.7"/><rect x="-6.1" y="-10.6" width="12.3" height="21.4" rx="4.5" transform="translate(402.8,224.4) skewX(-6)" fill="#ff00e6"/><path d="M396.8,228 L397.2,240 L401.8,233 Z" fill="#e000c8" opacity="0.8"/><rect x="-6.1" y="-9.3" width="12.3" height="18.8" rx="4.5" transform="translate(390.2,870.6) skewX(7)" fill="#fa00e0"/><path d="M383.6,866 L383.4,857 L388.2,862.5 Z" fill="#e000c8" opacity="0.7"/><rect x="-6.1" y="-10.6" width="12.3" height="21.4" rx="4.5" transform="translate(427.5,224.4) skewX(-6)" fill="#ff00e6"/><path d="M421.5,228 L421.9,240 L426.5,233 Z" fill="#e000c8" opacity="0.8"/><rect x="-6.1" y="-9.3" width="12.3" height="18.8" rx="4.5" transform="translate(414.9,870.6) skewX(7)" fill="#fa00e0"/><path d="M408.3,866 L408.1,857 L412.9,862.5 Z" fill="#e000c8" opacity="0.7"/><rect x="-6.1" y="-10.6" width="12.3" height="21.4" rx="4.5" transform="translate(452.2,224.4) skewX(-6)" fill="#ff00e6"/><path d="M446.2,228 L446.6,240 L451.2,233 Z" fill="#e000c8" opacity="0.8"/><rect x="-6.1" y="-9.3" width="12.3" height="18.8" rx="4.5" transform="translate(439.6,870.6) skewX(7)" fill="#fa00e0"/><path d="M433.0,866 L432.8,857 L437.6,862.5 Z" fill="#e000c8" opacity="0.7"/><rect x="-6.1" y="-10.6" width="12.3" height="21.4" rx="4.5" transform="translate(476.8,224.4) skewX(-6)" fill="#ff00e6"/><path d="M470.8,228 L471.2,240 L475.8,233 Z" fill="#e000c8" opacity="0.8"/><rect x="-6.1" y="-9.3" width="12.3" height="18.8" rx="4.5" transform="translate(464.2,870.6) skewX(7)" fill="#fa00e0"/><path d="M457.6,866 L457.4,857 L462.2,862.5 Z" fill="#e000c8" opacity="0.7"/><rect x="-6.1" y="-10.6" width="12.3" height="21.4" rx="4.5" transform="translate(501.5,224.4) skewX(-6)" fill="#ff00e6"/><path d="M495.5,228 L495.9,240 L500.5,233 Z" fill="#e000c8" opacity="0.8"/><rect x="-6.1" y="-9.3" width="12.3" height="18.8" rx="4.5" transform="translate(488.9,870.6) skewX(7)" fill="#fa00e0"/><path d="M482.3,866 L482.1,857 L486.9,862.5 Z" fill="#e000c8" opacity="0.7"/><rect x="-6.1" y="-10.6" width="12.3" height="21.4" rx="4.5" transform="translate(526.2,224.4) skewX(-6)" fill="#ff00e6"/><path d="M520.2,228 L520.6,240 L525.2,233 Z" fill="#e000c8" opacity="0.8"/><rect x="-6.1" y="-9.3" width="12.3" height="18.8" rx="4.5" transform="translate(513.6,870.6) skewX(7)" fill="#fa00e0"/><path d="M507.0,866 L506.8,857 L511.6,862.5 Z" fill="#e000c8" opacity="0.7"/><rect x="-6.1" y="-10.6" width="12.3" height="21.4" rx="4.5" transform="translate(550.9,224.4) skewX(-6)" fill="#ff00e6"/><path d="M544.9,228 L545.3,240 L549.9,233 Z" fill="#e000c8" opacity="0.8"/><rect x="-6.1" y="-9.3" width="12.3" height="18.8" rx="4.5" transform="translate(538.3,870.6) skewX(7)" fill="#fa00e0"/><path d="M531.7,866 L531.5,857 L536.3,862.5 Z" fill="#e000c8" opacity="0.7"/><rect x="-6.1" y="-10.6" width="12.3" height="21.4" rx="4.5" transform="translate(575.6,224.4) skewX(-6)" fill="#ff00e6"/><path d="M569.6,228 L570.0,240 L574.6,233 Z" fill="#e000c8" opacity="0.8"/><rect x="-6.1" y="-9.3" width="12.3" height="18.8" rx="4.5" transform="translate(563.0,870.6) skewX(7)" fill="#fa00e0"/><path d="M556.4,866 L556.2,857 L561.0,862.5 Z" fill="#e000c8" opacity="0.7"/><rect x="-6.1" y="-10.6" width="12.3" height="21.4" rx="4.5" transform="translate(600.2,224.4) skewX(-6)" fill="#ff00e6"/><path d="M594.2,228 L594.6,240 L599.2,233 Z" fill="#e000c8" opacity="0.8"/><rect x="-6.1" y="-9.3" width="12.3" height="18.8" rx="4.5" transform="translate(587.6,870.6) skewX(7)" fill="#fa00e0"/><path d="M581.0,866 L580.8,857 L585.6,862.5 Z" fill="#e000c8" opacity="0.7"/><rect x="-6.1" y="-10.6" width="12.3" height="21.4" rx="4.5" transform="translate(624.9,224.4) skewX(-6)" fill="#ff00e6"/><path d="M618.9,228 L619.3,240 L623.9,233 Z" fill="#e000c8" opacity="0.8"/><rect x="-6.1" y="-9.3" width="12.3" height="18.8" rx="4.5" transform="translate(612.3,870.6) skewX(7)" fill="#fa00e0"/><path d="M605.7,866 L605.5,857 L610.3,862.5 Z" fill="#e000c8" opacity="0.7"/><rect x="-6.1" y="-10.6" width="12.3" height="21.4" rx="4.5" transform="translate(649.6,224.4) skewX(-6)" fill="#ff00e6"/><path d="M643.6,228 L644.0,240 L648.6,233 Z" fill="#e000c8" opacity="0.8"/><rect x="-6.1" y="-9.3" width="12.3" height="18.8" rx="4.5" transform="translate(637.0,870.6) skewX(7)" fill="#fa00e0"/><path d="M630.4,866 L630.2,857 L635.0,862.5 Z" fill="#e000c8" opacity="0.7"/><rect x="-6.1" y="-10.6" width="12.3" height="21.4" rx="4.5" transform="translate(674.3,224.4) skewX(-6)" fill="#ff00e6"/><path d="M668.3,228 L668.7,240 L673.3,233 Z" fill="#e000c8" opacity="0.8"/><rect x="-6.1" y="-9.3" width="12.3" height="18.8" rx="4.5" transform="translate(661.7,870.6) skewX(7)" fill="#fa00e0"/><path d="M655.1,866 L654.9,857 L659.7,862.5 Z" fill="#e000c8" opacity="0.7"/><rect x="-6.1" y="-10.6" width="12.3" height="21.4" rx="4.5" transform="translate(699.0,224.4) skewX(-6)" fill="#ff00e6"/><path d="M693.0,228 L693.4,240 L698.0,233 Z" fill="#e000c8" opacity="0.8"/><rect x="-6.1" y="-9.3" width="12.3" height="18.8" rx="4.5" transform="translate(686.4,870.6) skewX(7)" fill="#fa00e0"/><path d="M679.8,866 L679.6,857 L684.4,862.5 Z" fill="#e000c8" opacity="0.7"/><rect x="-6.1" y="-10.6" width="12.3" height="21.4" rx="4.5" transform="translate(723.6,224.4) skewX(-6)" fill="#ff00e6"/><path d="M717.6,228 L718.0,240 L722.6,233 Z" fill="#e000c8" opacity="0.8"/><rect x="-6.1" y="-9.3" width="12.3" height="18.8" rx="4.5" transform="translate(711.0,870.6) skewX(7)" fill="#fa00e0"/><path d="M704.4,866 L704.2,857 L709.0,862.5 Z" fill="#e000c8" opacity="0.7"/><rect x="-6.1" y="-10.6" width="12.3" height="21.4" rx="4.5" transform="translate(748.3,224.4) skewX(-6)" fill="#ff00e6"/><path d="M742.3,228 L742.7,240 L747.3,233 Z" fill="#e000c8" opacity="0.8"/><rect x="-6.1" y="-9.3" width="12.3" height="18.8" rx="4.5" transform="translate(735.7,870.6) skewX(7)" fill="#fa00e0"/><path d="M729.1,866 L728.9,857 L733.7,862.5 Z" fill="#e000c8" opacity="0.7"/><rect x="-6.1" y="-10.6" width="12.3" height="21.4" rx="4.5" transform="translate(773.0,224.4) skewX(-6)" fill="#ff00e6"/><path d="M767.0,228 L767.4,240 L772.0,233 Z" fill="#e000c8" opacity="0.8"/><rect x="-6.1" y="-9.3" width="12.3" height="18.8" rx="4.5" transform="translate(760.4,870.6) skewX(7)" fill="#fa00e0"/><path d="M753.8,866 L753.6,857 L758.4,862.5 Z" fill="#e000c8" opacity="0.7"/><rect x="-6.1" y="-10.6" width="12.3" height="21.4" rx="4.5" transform="translate(797.7,224.4) skewX(-6)" fill="#ff00e6"/><path d="M791.7,228 L792.1,240 L796.7,233 Z" fill="#e000c8" opacity="0.8"/><rect x="-6.1" y="-9.3" width="12.3" height="18.8" rx="4.5" transform="translate(785.1,870.6) skewX(7)" fill="#fa00e0"/><path d="M778.5,866 L778.3,857 L783.1,862.5 Z" fill="#e000c8" opacity="0.7"/><rect x="-6.1" y="-10.6" width="12.3" height="21.4" rx="4.5" transform="translate(822.4,224.4) skewX(-6)" fill="#ff00e6"/><path d="M816.4,228 L816.8,240 L821.4,233 Z" fill="#e000c8" opacity="0.8"/><rect x="-6.1" y="-9.3" width="12.3" height="18.8" rx="4.5" transform="translate(809.8,870.6) skewX(7)" fill="#fa00e0"/><path d="M803.2,866 L803.0,857 L807.8,862.5 Z" fill="#e000c8" opacity="0.7"/><rect x="-6.1" y="-10.6" width="12.3" height="21.4" rx="4.5" transform="translate(847.0,224.4) skewX(-6)" fill="#ff00e6"/><path d="M841.0,228 L841.4,240 L846.0,233 Z" fill="#e000c8" opacity="0.8"/><rect x="-6.1" y="-9.3" width="12.3" height="18.8" rx="4.5" transform="translate(834.4,870.6) skewX(7)" fill="#fa00e0"/><path d="M827.8,866 L827.6,857 L832.4,862.5 Z" fill="#e000c8" opacity="0.7"/><rect x="-6.1" y="-10.6" width="12.3" height="21.4" rx="4.5" transform="translate(871.7,224.4) skewX(-6)" fill="#ff00e6"/><path d="M865.7,228 L866.1,240 L870.7,233 Z" fill="#e000c8" opacity="0.8"/><rect x="-6.1" y="-9.3" width="12.3" height="18.8" rx="4.5" transform="translate(859.1,870.6) skewX(7)" fill="#fa00e0"/><path d="M852.5,866 L852.3,857 L857.1,862.5 Z" fill="#e000c8" opacity="0.7"/><rect x="-6.1" y="-10.6" width="12.3" height="21.4" rx="4.5" transform="translate(896.4,224.4) skewX(-6)" fill="#ff00e6"/><path d="M890.4,228 L890.8,240 L895.4,233 Z" fill="#e000c8" opacity="0.8"/><rect x="-6.1" y="-9.3" width="12.3" height="18.8" rx="4.5" transform="translate(883.8,870.6) skewX(7)" fill="#fa00e0"/><path d="M877.2,866 L877.0,857 L881.8,862.5 Z" fill="#e000c8" opacity="0.7"/><rect x="-6.1" y="-10.6" width="12.3" height="21.4" rx="4.5" transform="translate(921.1,224.4) skewX(-6)" fill="#ff00e6"/><path d="M915.1,228 L915.5,240 L920.1,233 Z" fill="#e000c8" opacity="0.8"/><rect x="-6.1" y="-9.3" width="12.3" height="18.8" rx="4.5" transform="translate(908.5,870.6) skewX(7)" fill="#fa00e0"/><path d="M901.9,866 L901.7,857 L906.5,862.5 Z" fill="#e000c8" opacity="0.7"/><rect x="-6.1" y="-10.6" width="12.3" height="21.4" rx="4.5" transform="translate(945.8,224.4) skewX(-6)" fill="#ff00e6"/><path d="M939.8,228 L940.2,240 L944.8,233 Z" fill="#e000c8" opacity="0.8"/><rect x="-6.1" y="-9.3" width="12.3" height="18.8" rx="4.5" transform="translate(933.2,870.6) skewX(7)" fill="#fa00e0"/><path d="M926.6,866 L926.4,857 L931.2,862.5 Z" fill="#e000c8" opacity="0.7"/><rect x="-6.1" y="-10.6" width="12.3" height="21.4" rx="4.5" transform="translate(970.4,224.4) skewX(-6)" fill="#ff00e6"/><path d="M964.4,228 L964.8,240 L969.4,233 Z" fill="#e000c8" opacity="0.8"/><rect x="-6.1" y="-9.3" width="12.3" height="18.8" rx="4.5" transform="translate(957.8,870.6) skewX(7)" fill="#fa00e0"/><path d="M951.2,866 L951.0,857 L955.8,862.5 Z" fill="#e000c8" opacity="0.7"/><rect x="-6.1" y="-10.6" width="12.3" height="21.4" rx="4.5" transform="translate(995.1,224.4) skewX(-6)" fill="#ff00e6"/><path d="M989.1,228 L989.5,240 L994.1,233 Z" fill="#e000c8" opacity="0.8"/><rect x="-6.1" y="-9.3" width="12.3" height="18.8" rx="4.5" transform="translate(982.5,870.6) skewX(7)" fill="#fa00e0"/><path d="M975.9,866 L975.7,857 L980.5,862.5 Z" fill="#e000c8" opacity="0.7"/>
</g>
</g>
<rect x="8.0" y="105.5" width="949.0" height="885.0" fill="none" stroke="#b4b6b6" stroke-width="1.2"/>
<path d="M8.0,105.5 L8.0,117.5 M8.0,990.5 L8.0,980.5 M27.0,105.5 L27.0,110.5 M27.0,990.5 L27.0,984.5 M46.0,105.5 L46.0,110.5 M46.0,990.5 L46.0,984.5 M65.0,105.5 L65.0,110.5 M65.0,990.5 L65.0,984.5 M84.0,105.5 L84.0,110.5 M84.0,990.5 L84.0,984.5 M103.0,105.5 L103.0,117.5 M103.0,990.5 L103.0,980.5 M122.0,105.5 L122.0,110.5 M122.0,990.5 L122.0,984.5 M141.0,105.5 L141.0,110.5 M141.0,990.5 L141.0,984.5 M160.0,105.5 L160.0,110.5 M160.0,990.5 L160.0,984.5 M179.0,105.5 L179.0,110.5 M179.0,990.5 L179.0,984.5 M198.0,105.5 L198.0,117.5 M198.0,990.5 L198.0,980.5 M217.0,105.5 L217.0,110.5 M217.0,990.5 L217.0,984.5 M236.0,105.5 L236.0,110.5 M236.0,990.5 L236.0,984.5 M255.0,105.5 L255.0,110.5 M255.0,990.5 L255.0,984.5 M274.0,105.5 L274.0,110.5 M274.0,990.5 L274.0,984.5 M293.0,105.5 L293.0,117.5 M293.0,990.5 L293.0,980.5 M312.0,105.5 L312.0,110.5 M312.0,990.5 L312.0,984.5 M331.0,105.5 L331.0,110.5 M331.0,990.5 L331.0,984.5 M350.0,105.5 L350.0,110.5 M350.0,990.5 L350.0,984.5 M369.0,105.5 L369.0,110.5 M369.0,990.5 L369.0,984.5 M388.0,105.5 L388.0,117.5 M388.0,990.5 L388.0,980.5 M407.0,105.5 L407.0,110.5 M407.0,990.5 L407.0,984.5 M426.0,105.5 L426.0,110.5 M426.0,990.5 L426.0,984.5 M445.0,105.5 L445.0,110.5 M445.0,990.5 L445.0,984.5 M464.0,105.5 L464.0,110.5 M464.0,990.5 L464.0,984.5 M483.0,105.5 L483.0,117.5 M483.0,990.5 L483.0,980.5 M502.0,105.5 L502.0,110.5 M502.0,990.5 L502.0,984.5 M521.0,105.5 L521.0,110.5 M521.0,990.5 L521.0,984.5 M540.0,105.5 L540.0,110.5 M540.0,990.5 L540.0,984.5 M559.0,105.5 L559.0,110.5 M559.0,990.5 L559.0,984.5 M578.0,105.5 L578.0,117.5 M578.0,990.5 L578.0,980.5 M597.0,105.5 L597.0,110.5 M597.0,990.5 L597.0,984.5 M616.0,105.5 L616.0,110.5 M616.0,990.5 L616.0,984.5 M635.0,105.5 L635.0,110.5 M635.0,990.5 L635.0,984.5 M654.0,105.5 L654.0,110.5 M654.0,990.5 L654.0,984.5 M673.0,105.5 L673.0,117.5 M673.0,990.5 L673.0,980.5 M692.0,105.5 L692.0,110.5 M692.0,990.5 L692.0,984.5 M711.0,105.5 L711.0,110.5 M711.0,990.5 L711.0,984.5 M730.0,105.5 L730.0,110.5 M730.0,990.5 L730.0,984.5 M749.0,105.5 L749.0,110.5 M749.0,990.5 L749.0,984.5 M768.0,105.5 L768.0,117.5 M768.0,990.5 L768.0,980.5 M787.0,105.5 L787.0,110.5 M787.0,990.5 L787.0,984.5 M806.0,105.5 L806.0,110.5 M806.0,990.5 L806.0,984.5 M825.0,105.5 L825.0,110.5 M825.0,990.5 L825.0,984.5 M844.0,105.5 L844.0,110.5 M844.0,990.5 L844.0,984.5 M863.0,105.5 L863.0,117.5 M863.0,990.5 L863.0,980.5 M882.0,105.5 L882.0,110.5 M882.0,990.5 L882.0,984.5 M901.0,105.5 L901.0,110.5 M901.0,990.5 L901.0,984.5 M920.0,105.5 L920.0,110.5 M920.0,990.5 L920.0,984.5 M939.0,105.5 L939.0,110.5 M939.0,990.5 L939.0,984.5 M958.0,105.5 L958.0,117.5 M958.0,990.5 L958.0,980.5" stroke="#d0d2d2" stroke-width="0.9"/>
<path d="M8.0,128.5 L11.0,128.5 M957.0,128.5 L954.0,128.5 M8.0,150.6 L11.0,150.6 M957.0,150.6 L954.0,150.6 M8.0,172.7 L11.0,172.7 M957.0,172.7 L954.0,172.7 M8.0,194.8 L11.0,194.8 M957.0,194.8 L954.0,194.8 M8.0,216.9 L13.0,216.9 M957.0,216.9 L952.0,216.9 M8.0,239.1 L11.0,239.1 M957.0,239.1 L954.0,239.1 M8.0,261.2 L11.0,261.2 M957.0,261.2 L954.0,261.2 M8.0,283.3 L11.0,283.3 M957.0,283.3 L954.0,283.3 M8.0,305.4 L11.0,305.4 M957.0,305.4 L954.0,305.4 M8.0,327.6 L13.0,327.6 M957.0,327.6 L952.0,327.6 M8.0,349.7 L11.0,349.7 M957.0,349.7 L954.0,349.7 M8.0,371.8 L11.0,371.8 M957.0,371.8 L954.0,371.8 M8.0,393.9 L11.0,393.9 M957.0,393.9 L954.0,393.9 M8.0,416.0 L11.0,416.0 M957.0,416.0 L954.0,416.0 M8.0,438.1 L13.0,438.1 M957.0,438.1 L952.0,438.1 M8.0,460.3 L11.0,460.3 M957.0,460.3 L954.0,460.3 M8.0,482.4 L11.0,482.4 M957.0,482.4 L954.0,482.4 M8.0,504.5 L11.0,504.5 M957.0,504.5 L954.0,504.5 M8.0,526.6 L11.0,526.6 M957.0,526.6 L954.0,526.6 M8.0,548.8 L13.0,548.8 M957.0,548.8 L952.0,548.8 M8.0,570.9 L11.0,570.9 M957.0,570.9 L954.0,570.9 M8.0,593.0 L11.0,593.0 M957.0,593.0 L954.0,593.0 M8.0,615.1 L11.0,615.1 M957.0,615.1 L954.0,615.1 M8.0,637.2 L11.0,637.2 M957.0,637.2 L954.0,637.2 M8.0,659.4 L13.0,659.4 M957.0,659.4 L952.0,659.4 M8.0,681.5 L11.0,681.5 M957.0,681.5 L954.0,681.5 M8.0,703.6 L11.0,703.6 M957.0,703.6 L954.0,703.6 M8.0,725.7 L11.0,725.7 M957.0,725.7 L954.0,725.7 M8.0,747.8 L11.0,747.8 M957.0,747.8 L954.0,747.8 M8.0,770.0 L13.0,770.0 M957.0,770.0 L952.0,770.0 M8.0,792.1 L11.0,792.1 M957.0,792.1 L954.0,792.1 M8.0,814.2 L11.0,814.2 M957.0,814.2 L954.0,814.2 M8.0,836.3 L11.0,836.3 M957.0,836.3 L954.0,836.3 M8.0,858.4 L11.0,858.4 M957.0,858.4 L954.0,858.4 M8.0,880.5 L13.0,880.5 M957.0,880.5 L952.0,880.5 M8.0,902.7 L11.0,902.7 M957.0,902.7 L954.0,902.7 M8.0,924.8 L11.0,924.8 M957.0,924.8 L954.0,924.8 M8.0,946.9 L11.0,946.9 M957.0,946.9 L954.0,946.9 M8.0,969.0 L11.0,969.0 M957.0,969.0 L954.0,969.0" stroke="#8a8c8c" stroke-width="1"/>
<polygon points="472,107 494,107 483,118.2" fill="#070707" stroke="#e8905a" stroke-width="1.2"/>
<polygon points="472.5,119.5 492.6,119.5 492.6,137 482.6,147.5 472.5,137" fill="#ff8c14"/>
<text x="482.60" y="134.50" font-family='"Liberation Sans", sans-serif' font-size="14.5" font-weight="bold" fill="#5a1600" text-anchor="middle">T</text>
<text x="895.50" y="334.15" font-family='"Liberation Sans", sans-serif' font-size="15.9" font-weight="normal" fill="#dc2ccc" textLength="51.50" lengthAdjust="spacingAndGlyphs" stroke="#dc2ccc" stroke-width="0.3">200mV</text>
<text x="895.50" y="444.75" font-family='"Liberation Sans", sans-serif' font-size="15.9" font-weight="normal" fill="#dc2ccc" textLength="51.50" lengthAdjust="spacingAndGlyphs" stroke="#dc2ccc" stroke-width="0.3">100mV</text>
<text x="891.00" y="665.95" font-family='"Liberation Sans", sans-serif' font-size="15.9" font-weight="normal" fill="#dc2ccc" textLength="56.00" lengthAdjust="spacingAndGlyphs" stroke="#dc2ccc" stroke-width="0.3">-100mV</text>
<text x="891.00" y="776.55" font-family='"Liberation Sans", sans-serif' font-size="15.9" font-weight="normal" fill="#dc2ccc" textLength="56.00" lengthAdjust="spacingAndGlyphs" stroke="#dc2ccc" stroke-width="0.3">-200mV</text>
<text x="891.00" y="887.15" font-family='"Liberation Sans", sans-serif' font-size="15.9" font-weight="normal" fill="#c030c0" textLength="56.00" lengthAdjust="spacingAndGlyphs" opacity="0.55">-300mV</text>
<text x="83.25" y="980.40" font-family='"Liberation Sans", sans-serif' font-size="16" font-weight="normal" fill="#f0a066" textLength="39.75" lengthAdjust="spacingAndGlyphs" stroke="#f0a066" stroke-width="0.25">-20µs</text>
<text x="178.25" y="980.40" font-family='"Liberation Sans", sans-serif' font-size="16" font-weight="normal" fill="#f0a066" textLength="39.75" lengthAdjust="spacingAndGlyphs" stroke="#f0a066" stroke-width="0.25">-15µs</text>
<text x="273.25" y="980.40" font-family='"Liberation Sans", sans-serif' font-size="16" font-weight="normal" fill="#f0a066" textLength="39.75" lengthAdjust="spacingAndGlyphs" stroke="#f0a066" stroke-width="0.25">-10µs</text>
<text x="372.00" y="980.40" font-family='"Liberation Sans", sans-serif' font-size="16" font-weight="normal" fill="#f0a066" textLength="31.50" lengthAdjust="spacingAndGlyphs" stroke="#f0a066" stroke-width="0.25">-5µs</text>
<text x="474.50" y="980.40" font-family='"Liberation Sans", sans-serif' font-size="16" font-weight="normal" fill="#f0a066" textLength="18.00" lengthAdjust="spacingAndGlyphs" stroke="#f0a066" stroke-width="0.25">0s</text>
<text x="564.50" y="980.40" font-family='"Liberation Sans", sans-serif' font-size="16" font-weight="normal" fill="#f0a066" textLength="26.00" lengthAdjust="spacingAndGlyphs" stroke="#f0a066" stroke-width="0.25">5µs</text>
<text x="655.50" y="980.40" font-family='"Liberation Sans", sans-serif' font-size="16" font-weight="normal" fill="#f0a066" textLength="35.00" lengthAdjust="spacingAndGlyphs" stroke="#f0a066" stroke-width="0.25">10µs</text>
<text x="750.50" y="980.40" font-family='"Liberation Sans", sans-serif' font-size="16" font-weight="normal" fill="#f0a066" textLength="35.00" lengthAdjust="spacingAndGlyphs" stroke="#f0a066" stroke-width="0.25">15µs</text>
<text x="845.10" y="980.40" font-family='"Liberation Sans", sans-serif' font-size="16" font-weight="normal" fill="#f0a066" textLength="35.40" lengthAdjust="spacingAndGlyphs" stroke="#f0a066" stroke-width="0.25">20µs</text>
<path d="M42,497.2 L922,497.2 M42,578.9 L922,578.9" fill="none" stroke="#cc1a14" stroke-width="1.9"/>
<path d="M42.5,497.3 L42.5,578.9 M921.5,497.3 L921.5,578.9" fill="none" stroke="#b02020" stroke-width="1.3"/>
<path d="M43,548.9 L921,548.9" stroke="#ae1a1e" stroke-width="3.8"/>
<path d="M46.0,546.5 L46.0,551.5 M65.0,546.5 L65.0,551.5 M84.0,546.5 L84.0,551.5 M103.0,546.5 L103.0,551.5 M122.0,546.5 L122.0,551.5 M141.0,546.5 L141.0,551.5 M160.0,546.5 L160.0,551.5 M179.0,546.5 L179.0,551.5 M198.0,546.5 L198.0,551.5 M217.0,546.5 L217.0,551.5 M236.0,546.5 L236.0,551.5 M255.0,546.5 L255.0,551.5 M274.0,546.5 L274.0,551.5 M293.0,546.5 L293.0,551.5 M312.0,546.5 L312.0,551.5 M331.0,546.5 L331.0,551.5 M350.0,546.5 L350.0,551.5 M369.0,546.5 L369.0,551.5 M388.0,546.5 L388.0,551.5 M407.0,546.5 L407.0,551.5 M426.0,546.5 L426.0,551.5 M445.0,546.5 L445.0,551.5 M464.0,546.5 L464.0,551.5 M483.0,546.5 L483.0,551.5 M502.0,546.5 L502.0,551.5 M521.0,546.5 L521.0,551.5 M540.0,546.5 L540.0,551.5 M559.0,546.5 L559.0,551.5 M578.0,546.5 L578.0,551.5 M597.0,546.5 L597.0,551.5 M616.0,546.5 L616.0,551.5 M635.0,546.5 L635.0,551.5 M654.0,546.5 L654.0,551.5 M673.0,546.5 L673.0,551.5 M692.0,546.5 L692.0,551.5 M711.0,546.5 L711.0,551.5 M730.0,546.5 L730.0,551.5 M749.0,546.5 L749.0,551.5 M768.0,546.5 L768.0,551.5 M787.0,546.5 L787.0,551.5 M806.0,546.5 L806.0,551.5 M825.0,546.5 L825.0,551.5 M844.0,546.5 L844.0,551.5 M863.0,546.5 L863.0,551.5 M882.0,546.5 L882.0,551.5 M901.0,546.5 L901.0,551.5 M920.0,546.5 L920.0,551.5" stroke="#e9a0a0" stroke-width="0.9" opacity="0.55"/>
<polygon points="89.8,548.8 100.3,528.3 166.5,528.3 177,548.8 166.5,569.3 100.3,569.3" fill="#545454" stroke="#12938c" stroke-width="1.6" stroke-linejoin="round"/>
<text x="104.30" y="555.60" font-family='"Liberation Sans", sans-serif' font-size="18" font-weight="normal" fill="#f8f8f8" textLength="56.90" lengthAdjust="spacingAndGlyphs" stroke="#f8f8f8" stroke-width="0.35">Left:55</text>
<polygon points="287.6,548.8 298.1,528.3 364.0,528.3 374.5,548.8 364.0,569.3 298.1,569.3" fill="#545454" stroke="#1212d8" stroke-width="1.6" stroke-linejoin="round"/>
<text x="298.30" y="555.60" font-family='"Liberation Sans", sans-serif' font-size="18" font-weight="normal" fill="#f8f8f8" textLength="65.40" lengthAdjust="spacingAndGlyphs" stroke="#f8f8f8" stroke-width="0.35">Right:55</text>
<polygon points="484.5,548.8 495.0,528.3 561.5,528.3 572,548.8 561.5,569.3 495.0,569.3" fill="#545454" stroke="#12938c" stroke-width="1.6" stroke-linejoin="round"/>
<text x="499.00" y="555.60" font-family='"Liberation Sans", sans-serif' font-size="18" font-weight="normal" fill="#f8f8f8" textLength="57.00" lengthAdjust="spacingAndGlyphs" stroke="#f8f8f8" stroke-width="0.35">Left:55</text>
<polygon points="683,548.8 693.5,528.3 759.5,528.3 770,548.8 759.5,569.3 693.5,569.3" fill="#545454" stroke="#1212d8" stroke-width="1.6" stroke-linejoin="round"/>
<text x="693.80" y="555.60" font-family='"Liberation Sans", sans-serif' font-size="18" font-weight="normal" fill="#f8f8f8" textLength="65.60" lengthAdjust="spacingAndGlyphs" stroke="#f8f8f8" stroke-width="0.35">Right:55</text>
<text x="17.90" y="524.30" font-family='"Liberation Sans", sans-serif' font-size="17.5" font-weight="normal" fill="#f04e4e" textLength="25.70" lengthAdjust="spacingAndGlyphs">I2S</text>
<polygon points="8.6,538.6 33,538.6 41.3,548 33,557.4 8.6,557.4" fill="#ff22f0"/>
<text x="20.30" y="554.00" font-family='"Liberation Sans", sans-serif' font-size="14.5" font-weight="normal" fill="#a3129c" text-anchor="middle">3</text>
<polygon points="957,538.6 932.5,538.6 922.5,548 932.5,557.4 957,557.4" fill="#ff9a1e"/>
<text x="943.60" y="554.20" font-family='"Liberation Sans", sans-serif' font-size="14.5" font-weight="bold" fill="#5a1600" text-anchor="middle">T</text>
<rect x="957.5" y="77" width="5.5" height="913.8" fill="#8c8f90"/>
<rect x="963" y="77" width="949" height="28.5" fill="#3e484c"/>
<text x="967.95" y="98.75" font-family='"Liberation Sans", sans-serif' font-size="18" font-weight="normal" fill="#f2f4f4" textLength="112.85" lengthAdjust="spacingAndGlyphs">Decode1 (I2S)</text>
<path d="M1877.5,82 L1896.5,101 M1896.5,82 L1877.5,101" stroke="#fbfbfb" stroke-width="1.8"/>
<rect x="963" y="105.5" width="949" height="885.4" fill="#ffffff"/>
<rect x="963" y="105.2" width="949" height="29.999999999999986" fill="#c2c2c2"/>
<rect x="963" y="165.2" width="949" height="30.0" fill="#c2c2c2"/>
<rect x="963" y="225.2" width="949" height="30.0" fill="#c2c2c2"/>
<rect x="963" y="285.2" width="949" height="30.0" fill="#c2c2c2"/>
<rect x="963" y="345.2" width="949" height="30.0" fill="#c2c2c2"/>
<rect x="963" y="405.2" width="949" height="30.0" fill="#c2c2c2"/>
<rect x="963" y="465.2" width="949" height="30.0" fill="#c2c2c2"/>
<rect x="963" y="525.2" width="949" height="30.0" fill="#c2c2c2"/>
<rect x="963" y="585.2" width="949" height="30.0" fill="#c2c2c2"/>
<rect x="963" y="645.2" width="949" height="30.0" fill="#c2c2c2"/>
<rect x="963" y="705.2" width="949" height="30.0" fill="#c2c2c2"/>
<rect x="963" y="765.2" width="949" height="30.0" fill="#c2c2c2"/>
<rect x="963" y="825.2" width="949" height="30.0" fill="#c2c2c2"/>
<rect x="963" y="885.2" width="949" height="30.0" fill="#c2c2c2"/>
<rect x="963" y="945.2" width="949" height="30.0" fill="#c2c2c2"/>
<path d="M1200.6,105.5 L1200.6,255" stroke="#1c1c1c" stroke-width="1.3"/>
<path d="M1437.8,105.5 L1437.8,255" stroke="#1c1c1c" stroke-width="1.3"/>
<path d="M1674.8,105.5 L1674.8,255" stroke="#1c1c1c" stroke-width="1.3"/>
<path d="M1911.6,105.5 L1911.6,255" stroke="#555" stroke-width="1"/>
<text x="1065.10" y="125.70" font-family='"Liberation Sans", sans-serif' font-size="13.6" font-weight="bold" fill="#0a0a0a" textLength="35.40" lengthAdjust="spacingAndGlyphs">Index</text>
<text x="1302.60" y="125.70" font-family='"Liberation Sans", sans-serif' font-size="13.6" font-weight="bold" fill="#0a0a0a" textLength="32.80" lengthAdjust="spacingAndGlyphs">Time</text>
<text x="1515.10" y="125.70" font-family='"Liberation Sans", sans-serif' font-size="13.6" font-weight="bold" fill="#0a0a0a" textLength="82.40" lengthAdjust="spacingAndGlyphs">Left Channel</text>
<text x="1747.80" y="125.70" font-family='"Liberation Sans", sans-serif' font-size="13.6" font-weight="bold" fill="#0a0a0a" textLength="90.20" lengthAdjust="spacingAndGlyphs">Right Channel</text>
<text x="1077.60" y="156.20" font-family='"Liberation Sans", sans-serif' font-size="14.6" font-weight="normal" fill="#151515" textLength="8.20" lengthAdjust="spacingAndGlyphs">1</text>
<text x="1290.70" y="156.20" font-family='"Liberation Sans", sans-serif' font-size="14.6" font-weight="normal" fill="#151515" textLength="56.60" lengthAdjust="spacingAndGlyphs">-20.64us</text>
<text x="1548.10" y="156.20" font-family='"Liberation Sans", sans-serif' font-size="14.6" font-weight="normal" fill="#151515" textLength="16.90" lengthAdjust="spacingAndGlyphs">55</text>
<text x="1077.60" y="186.20" font-family='"Liberation Sans", sans-serif' font-size="14.6" font-weight="normal" fill="#151515" textLength="8.20" lengthAdjust="spacingAndGlyphs">2</text>
<text x="1290.70" y="186.20" font-family='"Liberation Sans", sans-serif' font-size="14.6" font-weight="normal" fill="#151515" textLength="56.60" lengthAdjust="spacingAndGlyphs">-10.22us</text>
<text x="1784.60" y="186.20" font-family='"Liberation Sans", sans-serif' font-size="14.6" font-weight="normal" fill="#151515" textLength="17.00" lengthAdjust="spacingAndGlyphs">55</text>
<text x="1077.60" y="216.20" font-family='"Liberation Sans", sans-serif' font-size="14.6" font-weight="normal" fill="#151515" textLength="8.20" lengthAdjust="spacingAndGlyphs">3</text>
<text x="1293.60" y="216.20" font-family='"Liberation Sans", sans-serif' font-size="14.6" font-weight="normal" fill="#151515" textLength="51.60" lengthAdjust="spacingAndGlyphs">187.2ns</text>
<text x="1548.10" y="216.20" font-family='"Liberation Sans", sans-serif' font-size="14.6" font-weight="normal" fill="#151515" textLength="16.90" lengthAdjust="spacingAndGlyphs">55</text>
<text x="1077.60" y="246.20" font-family='"Liberation Sans", sans-serif' font-size="14.6" font-weight="normal" fill="#151515" textLength="8.20" lengthAdjust="spacingAndGlyphs">4</text>
<text x="1297.80" y="246.20" font-family='"Liberation Sans", sans-serif' font-size="14.6" font-weight="normal" fill="#151515" textLength="43.50" lengthAdjust="spacingAndGlyphs">10.6us</text>
<text x="1784.60" y="246.20" font-family='"Liberation Sans", sans-serif' font-size="14.6" font-weight="normal" fill="#151515" textLength="17.00" lengthAdjust="spacingAndGlyphs">55</text>
<g fill="#ffffff" stroke="#9a9a9a" stroke-width="0.8"><rect x="1862.5" y="953.3" width="26" height="3.6" rx="1"/><rect x="1862.5" y="963.2" width="20" height="3.6" rx="1"/><rect x="1862.5" y="973.2" width="26" height="3.6" rx="1"/><path d="M1895.5,955.5 L1898.5,958 L1890,965 L1898.5,972 L1895.5,974.8 L1884,965 Z"/></g>
<rect x="8" y="1000.5" width="70.5" height="72.5" rx="6" fill="url(#gHome)"/>
<rect x="23.8" y="1018" width="16.8" height="16.6" rx="3.2" fill="url(#gSq)" stroke="#a6d0ee" stroke-width="1.1" opacity="0.95"/>
<rect x="45" y="1018" width="16.8" height="16.6" rx="3.2" fill="url(#gSq)" stroke="#a6d0ee" stroke-width="1.1" opacity="0.95"/>
<rect x="23.8" y="1038.2" width="16.8" height="16.6" rx="3.2" fill="url(#gSq)" stroke="#a6d0ee" stroke-width="1.1" opacity="0.95"/>
<rect x="45" y="1038.2" width="16.8" height="16.6" rx="3.2" fill="url(#gSq)" stroke="#a6d0ee" stroke-width="1.1" opacity="0.95"/>
<rect x="91.25" y="1009.5" width="153" height="62.5" rx="5" fill="url(#gCh)" stroke="#7a888e" stroke-width="1"/>
<path d="M91.25,1018 L91.25,1006 Q91.25,1000.8 96.25,1000.8 L159.25,1000.8 Q164.25,1000.8 164.25,1006 L164.25,1018 Z" fill="#000"/>
<path d="M91.25,1018 L91.25,1006 Q91.25,1000.8 96.25,1000.8 L159.25,1000.8 Q164.25,1000.8 164.25,1006 L164.25,1010" fill="none" stroke="#7a888e" stroke-width="1"/>
<text x="104.95" y="1016.30" font-family='"Liberation Sans", sans-serif' font-size="14.6" font-weight="normal" fill="#e4e468" textLength="28.10" lengthAdjust="spacingAndGlyphs" stroke="#e4e468" stroke-width="0.3">CH1</text>
<text x="101.75" y="1039.70" font-family='"Liberation Sans", sans-serif' font-size="18.3" font-weight="normal" fill="#e6f01e" textLength="89.80" lengthAdjust="spacingAndGlyphs" stroke="#e6f01e" stroke-width="0.3">100.00mV/</text>
<path d="M200.85,1029.2 L216.04999999999998,1029.2" stroke="#f4f4f4" stroke-width="1.9"/>
<path d="M200.85,1034.7 L216.04999999999998,1034.7" stroke="#f4f4f4" stroke-width="1.9" stroke-dasharray="2.6 1.6"/>
<text x="101.85" y="1061.70" font-family='"Liberation Sans", sans-serif' font-size="15.8" font-weight="normal" fill="#f4f6f6" textLength="41.90" lengthAdjust="spacingAndGlyphs" stroke="#f4f6f6" stroke-width="0.25">0.00V</text>
<rect x="252.25" y="1009.5" width="153" height="62.5" rx="5" fill="url(#gCh)" stroke="#7a888e" stroke-width="1"/>
<path d="M252.25,1018 L252.25,1006 Q252.25,1000.8 257.25,1000.8 L320.25,1000.8 Q325.25,1000.8 325.25,1006 L325.25,1018 Z" fill="#000"/>
<path d="M252.25,1018 L252.25,1006 Q252.25,1000.8 257.25,1000.8 L320.25,1000.8 Q325.25,1000.8 325.25,1006 L325.25,1010" fill="none" stroke="#7a888e" stroke-width="1"/>
<text x="265.95" y="1016.30" font-family='"Liberation Sans", sans-serif' font-size="14.6" font-weight="normal" fill="#2fcfb2" textLength="28.10" lengthAdjust="spacingAndGlyphs" stroke="#2fcfb2" stroke-width="0.3">CH2</text>
<text x="262.75" y="1039.70" font-family='"Liberation Sans", sans-serif' font-size="18.3" font-weight="normal" fill="#1fcde0" textLength="89.80" lengthAdjust="spacingAndGlyphs" stroke="#1fcde0" stroke-width="0.3">100.00mV/</text>
<path d="M361.85,1029.2 L377.05,1029.2" stroke="#f4f4f4" stroke-width="1.9"/>
<path d="M361.85,1034.7 L377.05,1034.7" stroke="#f4f4f4" stroke-width="1.9" stroke-dasharray="2.6 1.6"/>
<text x="262.85" y="1061.70" font-family='"Liberation Sans", sans-serif' font-size="15.8" font-weight="normal" fill="#f4f6f6" textLength="41.90" lengthAdjust="spacingAndGlyphs" stroke="#f4f6f6" stroke-width="0.25">0.00V</text>
<rect x="412.6" y="1008.7" width="153" height="63.5" rx="5" fill="#ff14f0"/>
<rect x="414.6" y="1018" width="149" height="52.3" rx="3" fill="url(#gCh3)"/>
<path d="M413.6,1018.5 L413.6,1006 Q413.6,1001.6 418.6,1001.6 L480.6,1001.6 Q485.1,1001.6 485.1,1006 L485.1,1018.5 Z" fill="#000"/>
<path d="M413.6,1018.5 L413.6,1006 Q413.6,1001.6 418.6,1001.6 L480.6,1001.6 Q485.1,1001.6 485.1,1006 L485.1,1009" fill="none" stroke="#ff14f0" stroke-width="2"/>
<text x="426.30" y="1016.30" font-family='"Liberation Sans", sans-serif' font-size="14.6" font-weight="normal" fill="#f020c8" textLength="28.10" lengthAdjust="spacingAndGlyphs" stroke="#f020c8" stroke-width="0.3">CH3</text>
<text x="423.10" y="1039.70" font-family='"Liberation Sans", sans-serif' font-size="18.3" font-weight="normal" fill="#f21ad4" textLength="89.80" lengthAdjust="spacingAndGlyphs" stroke="#f21ad4" stroke-width="0.3">100.00mV/</text>
<path d="M522.2,1029.2 L537.4000000000001,1029.2" stroke="#f4f4f4" stroke-width="1.9"/>
<path d="M522.2,1034.7 L537.4000000000001,1034.7" stroke="#f4f4f4" stroke-width="1.9" stroke-dasharray="2.6 1.6"/>
<text x="423.20" y="1061.70" font-family='"Liberation Sans", sans-serif' font-size="15.8" font-weight="normal" fill="#f4f6f6" textLength="41.90" lengthAdjust="spacingAndGlyphs" stroke="#f4f6f6" stroke-width="0.25">0.00V</text>
<rect x="573.75" y="1009.5" width="153" height="62.5" rx="5" fill="url(#gCh)" stroke="#7a888e" stroke-width="1"/>
<path d="M573.75,1018 L573.75,1006 Q573.75,1000.8 578.75,1000.8 L641.75,1000.8 Q646.75,1000.8 646.75,1006 L646.75,1018 Z" fill="#000"/>
<path d="M573.75,1018 L573.75,1006 Q573.75,1000.8 578.75,1000.8 L641.75,1000.8 Q646.75,1000.8 646.75,1006 L646.75,1010" fill="none" stroke="#7a888e" stroke-width="1"/>
<text x="587.45" y="1016.30" font-family='"Liberation Sans", sans-serif' font-size="14.6" font-weight="normal" fill="#a9b1b1" textLength="28.10" lengthAdjust="spacingAndGlyphs" stroke="#a9b1b1" stroke-width="0.3">CH4</text>
<text x="584.25" y="1039.70" font-family='"Liberation Sans", sans-serif' font-size="18.3" font-weight="normal" fill="#93a4a9" textLength="89.80" lengthAdjust="spacingAndGlyphs" stroke="#93a4a9" stroke-width="0.3">100.00mV/</text>
<path d="M683.35,1029.2 L698.5500000000001,1029.2" stroke="#8a9aa0" stroke-width="1.9"/>
<path d="M683.35,1034.7 L698.5500000000001,1034.7" stroke="#8a9aa0" stroke-width="1.9" stroke-dasharray="2.6 1.6"/>
<text x="584.35" y="1061.70" font-family='"Liberation Sans", sans-serif' font-size="15.8" font-weight="normal" fill="#93a4a9" textLength="41.90" lengthAdjust="spacingAndGlyphs" stroke="#93a4a9" stroke-width="0.25">0.00V</text>
<rect x="744.4" y="1009.5" width="119.5" height="62.5" rx="5" fill="url(#gCh)" stroke="#7a888e" stroke-width="1"/>
<path d="M792.0,1018 L792.0,1006 Q792.0,1000.8 797.0,1000.8 L858.9,1000.8 Q863.9,1000.8 863.9,1006 L863.9,1018 Z" fill="#000"/>
<path d="M792.0,1010 L792.0,1006 Q792.0,1000.8 797.0,1000.8 L858.9,1000.8 Q863.9,1000.8 863.9,1006 L863.9,1018" fill="none" stroke="#7a888e" stroke-width="1"/>
<text x="813.70" y="1016.20" font-family='"Liberation Sans", sans-serif' font-size="14.6" font-weight="normal" fill="#b9bdbd" textLength="43.40" lengthAdjust="spacingAndGlyphs" stroke="#b9bdbd" stroke-width="0.25">Math1</text>
<text x="752.70" y="1039.60" font-family='"Liberation Sans", sans-serif' font-size="18" font-weight="normal" fill="#a2b1b6" textLength="87.30" lengthAdjust="spacingAndGlyphs" stroke="#a2b1b6" stroke-width="0.25">500.00mV/</text>
<text x="752.30" y="1061.60" font-family='"Liberation Sans", sans-serif' font-size="15.7" font-weight="normal" fill="#a2b1b6" textLength="66.90" lengthAdjust="spacingAndGlyphs" stroke="#a2b1b6" stroke-width="0.25">CH1+CH1</text>
<rect x="871.3" y="1009.5" width="119.5" height="62.5" rx="5" fill="url(#gCh)" stroke="#7a888e" stroke-width="1"/>
<path d="M918.9,1018 L918.9,1006 Q918.9,1000.8 923.9,1000.8 L985.8,1000.8 Q990.8,1000.8 990.8,1006 L990.8,1018 Z" fill="#000"/>
<path d="M918.9,1010 L918.9,1006 Q918.9,1000.8 923.9,1000.8 L985.8,1000.8 Q990.8,1000.8 990.8,1006 L990.8,1018" fill="none" stroke="#7a888e" stroke-width="1"/>
<text x="940.60" y="1016.20" font-family='"Liberation Sans", sans-serif' font-size="14.6" font-weight="normal" fill="#b9bdbd" textLength="43.40" lengthAdjust="spacingAndGlyphs" stroke="#b9bdbd" stroke-width="0.25">Math2</text>
<text x="879.60" y="1039.60" font-family='"Liberation Sans", sans-serif' font-size="18" font-weight="normal" fill="#a2b1b6" textLength="87.30" lengthAdjust="spacingAndGlyphs" stroke="#a2b1b6" stroke-width="0.25">500.00mV/</text>
<text x="879.20" y="1061.60" font-family='"Liberation Sans", sans-serif' font-size="15.7" font-weight="normal" fill="#a2b1b6" textLength="66.90" lengthAdjust="spacingAndGlyphs" stroke="#a2b1b6" stroke-width="0.25">CH1+CH1</text>
<rect x="998.5" y="1009.5" width="119.5" height="62.5" rx="5" fill="url(#gCh)" stroke="#7a888e" stroke-width="1"/>
<path d="M1046.1,1018 L1046.1,1006 Q1046.1,1000.8 1051.1,1000.8 L1113.0,1000.8 Q1118.0,1000.8 1118.0,1006 L1118.0,1018 Z" fill="#000"/>
<path d="M1046.1,1010 L1046.1,1006 Q1046.1,1000.8 1051.1,1000.8 L1113.0,1000.8 Q1118.0,1000.8 1118.0,1006 L1118.0,1018" fill="none" stroke="#7a888e" stroke-width="1"/>
<text x="1067.80" y="1016.20" font-family='"Liberation Sans", sans-serif' font-size="14.6" font-weight="normal" fill="#b9bdbd" textLength="43.40" lengthAdjust="spacingAndGlyphs" stroke="#b9bdbd" stroke-width="0.25">Math3</text>
<text x="1006.80" y="1039.60" font-family='"Liberation Sans", sans-serif' font-size="18" font-weight="normal" fill="#a2b1b6" textLength="87.30" lengthAdjust="spacingAndGlyphs" stroke="#a2b1b6" stroke-width="0.25">500.00mV/</text>
<text x="1006.40" y="1061.60" font-family='"Liberation Sans", sans-serif' font-size="15.7" font-weight="normal" fill="#a2b1b6" textLength="66.90" lengthAdjust="spacingAndGlyphs" stroke="#a2b1b6" stroke-width="0.25">CH1+CH1</text>
<rect x="1125.2" y="1009.5" width="119.5" height="62.5" rx="5" fill="url(#gCh)" stroke="#7a888e" stroke-width="1"/>
<path d="M1172.8,1018 L1172.8,1006 Q1172.8,1000.8 1177.8,1000.8 L1239.7,1000.8 Q1244.7,1000.8 1244.7,1006 L1244.7,1018 Z" fill="#000"/>
<path d="M1172.8,1010 L1172.8,1006 Q1172.8,1000.8 1177.8,1000.8 L1239.7,1000.8 Q1244.7,1000.8 1244.7,1006 L1244.7,1018" fill="none" stroke="#7a888e" stroke-width="1"/>
<text x="1194.50" y="1016.20" font-family='"Liberation Sans", sans-serif' font-size="14.6" font-weight="normal" fill="#b9bdbd" textLength="43.40" lengthAdjust="spacingAndGlyphs" stroke="#b9bdbd" stroke-width="0.25">Math4</text>
<text x="1133.50" y="1039.60" font-family='"Liberation Sans", sans-serif' font-size="18" font-weight="normal" fill="#a2b1b6" textLength="87.30" lengthAdjust="spacingAndGlyphs" stroke="#a2b1b6" stroke-width="0.25">500.00mV/</text>
<text x="1133.10" y="1061.60" font-family='"Liberation Sans", sans-serif' font-size="15.7" font-weight="normal" fill="#a2b1b6" textLength="66.90" lengthAdjust="spacingAndGlyphs" stroke="#a2b1b6" stroke-width="0.25">CH1+CH1</text>
<rect x="1261.75" y="1009.5" width="119.5" height="62.5" rx="5" fill="url(#gCh)" stroke="#7a888e" stroke-width="1"/>
<path d="M1309.35,1018 L1309.35,1006 Q1309.35,1000.8 1314.35,1000.8 L1376.25,1000.8 Q1381.25,1000.8 1381.25,1006 L1381.25,1018 Z" fill="#000"/>
<path d="M1309.35,1010 L1309.35,1006 Q1309.35,1000.8 1314.35,1000.8 L1376.25,1000.8 Q1381.25,1000.8 1381.25,1006 L1381.25,1018" fill="none" stroke="#7a888e" stroke-width="1"/>
<text x="1334.45" y="1016.20" font-family='"Liberation Sans", sans-serif' font-size="14.6" font-weight="normal" fill="#b9bdbd" textLength="40.00" lengthAdjust="spacingAndGlyphs" stroke="#b9bdbd" stroke-width="0.25">RTSA</text>
<text x="1270.05" y="1039.60" font-family='"Liberation Sans", sans-serif' font-size="18" font-weight="normal" fill="#a2b1b6" textLength="78.80" lengthAdjust="spacingAndGlyphs" stroke="#a2b1b6" stroke-width="0.25">C: 2.5GHz</text>
<text x="1269.65" y="1061.60" font-family='"Liberation Sans", sans-serif' font-size="15.7" font-weight="normal" fill="#a2b1b6" textLength="57.30" lengthAdjust="spacingAndGlyphs" stroke="#a2b1b6" stroke-width="0.25">S: 5GHz</text>
<text x="1812.30" y="1019.80" font-family='"Liberation Sans", sans-serif' font-size="16.5" font-weight="bold" font-style="italic" fill="#f2f2f2" textLength="21.60" lengthAdjust="spacingAndGlyphs" stroke="#f2f2f2" stroke-width="0.6">LXI</text>
<path d="M1822,1022 L1829,1011" stroke="#9a9a9a" stroke-width="1.3"/>
<path d="M1841.5,1012.5 L1848.5,1005.5 L1851.5,1007 L1851.5,1018.5 L1848.5,1020 L1841.5,1013.5 Z" fill="none" stroke="#e8e8e8" stroke-width="1.3" stroke-linejoin="round"/>
<path d="M1847,1008.5 L1847,1017" stroke="#cfcfcf" stroke-width="1"/>
<path d="M1853.5,1009.5 L1860,1016 M1860,1009.5 L1853.5,1016" stroke="#a8a8a8" stroke-width="1"/>
<text x="1805.40" y="1046.80" font-family='"Liberation Sans", sans-serif' font-size="16.2" font-weight="normal" fill="#f0f0f0" textLength="60.40" lengthAdjust="spacingAndGlyphs">18:22:01</text>
<text x="1793.00" y="1069.80" font-family='"Liberation Sans", sans-serif' font-size="16.2" font-weight="normal" fill="#f0f0f0" textLength="86.10" lengthAdjust="spacingAndGlyphs">2021/07/08</text>
<path d="M1072,347.5 L1072,271" stroke="#d8181c" stroke-width="1.9"/>
<polygon points="1072,259 1066.4,274.5 1077.6,274.5" fill="#e81820"/>
<path d="M1308,347.5 L1308,271" stroke="#d8181c" stroke-width="1.9"/>
<polygon points="1308,259 1302.4,274.5 1313.6,274.5" fill="#e81820"/>
<path d="M1547.6,346.5 L1547.6,271" stroke="#d8181c" stroke-width="1.9"/>
<polygon points="1547.6,259 1542.0,274.5 1553.1999999999998,274.5" fill="#e81820"/>
<path d="M1791,346.5 L1791,271" stroke="#d8181c" stroke-width="1.9"/>
<polygon points="1791,259 1785.4,274.5 1796.6,274.5" fill="#e81820"/>
<text x="1013.60" y="375.00" font-family='"Liberation Sans", sans-serif' font-size="25.2" font-weight="normal" fill="#e81820" textLength="95.60" lengthAdjust="spacingAndGlyphs">Line No.</text>
<text x="1280.00" y="375.00" font-family='"Liberation Sans", sans-serif' font-size="25.2" font-weight="normal" fill="#e81820" textLength="56.30" lengthAdjust="spacingAndGlyphs">Time</text>
<text x="1474.80" y="360.80" font-family='"Liberation Sans", sans-serif' font-size="25.2" font-weight="normal" fill="#e81820" textLength="144.80" lengthAdjust="spacingAndGlyphs">Left Channel</text>
<text x="1465.50" y="389.60" font-family='"Liberation Sans", sans-serif' font-size="25.2" font-weight="normal" fill="#e81820" textLength="164.40" lengthAdjust="spacingAndGlyphs">Decoded Data</text>
<text x="1709.80" y="360.80" font-family='"Liberation Sans", sans-serif' font-size="25.2" font-weight="normal" fill="#e81820" textLength="161.40" lengthAdjust="spacingAndGlyphs">Right Channel</text>
<text x="1708.80" y="389.60" font-family='"Liberation Sans", sans-serif' font-size="25.2" font-weight="normal" fill="#e81820" textLength="164.40" lengthAdjust="spacingAndGlyphs">Decoded Data</text>
<path d="M1064.6,753 L922,589" stroke="#e81820" stroke-width="2.1"/>
<polygon points="914.5,580.0 929.2,589.1 921.4,595.9" fill="#e81820"/>
<text x="1043.70" y="786.40" font-family='"Liberation Sans", sans-serif' font-size="25.2" font-weight="normal" fill="#e81820" textLength="83.40" lengthAdjust="spacingAndGlyphs">I2S Bus</text>
</svg>
</body>
</html>
